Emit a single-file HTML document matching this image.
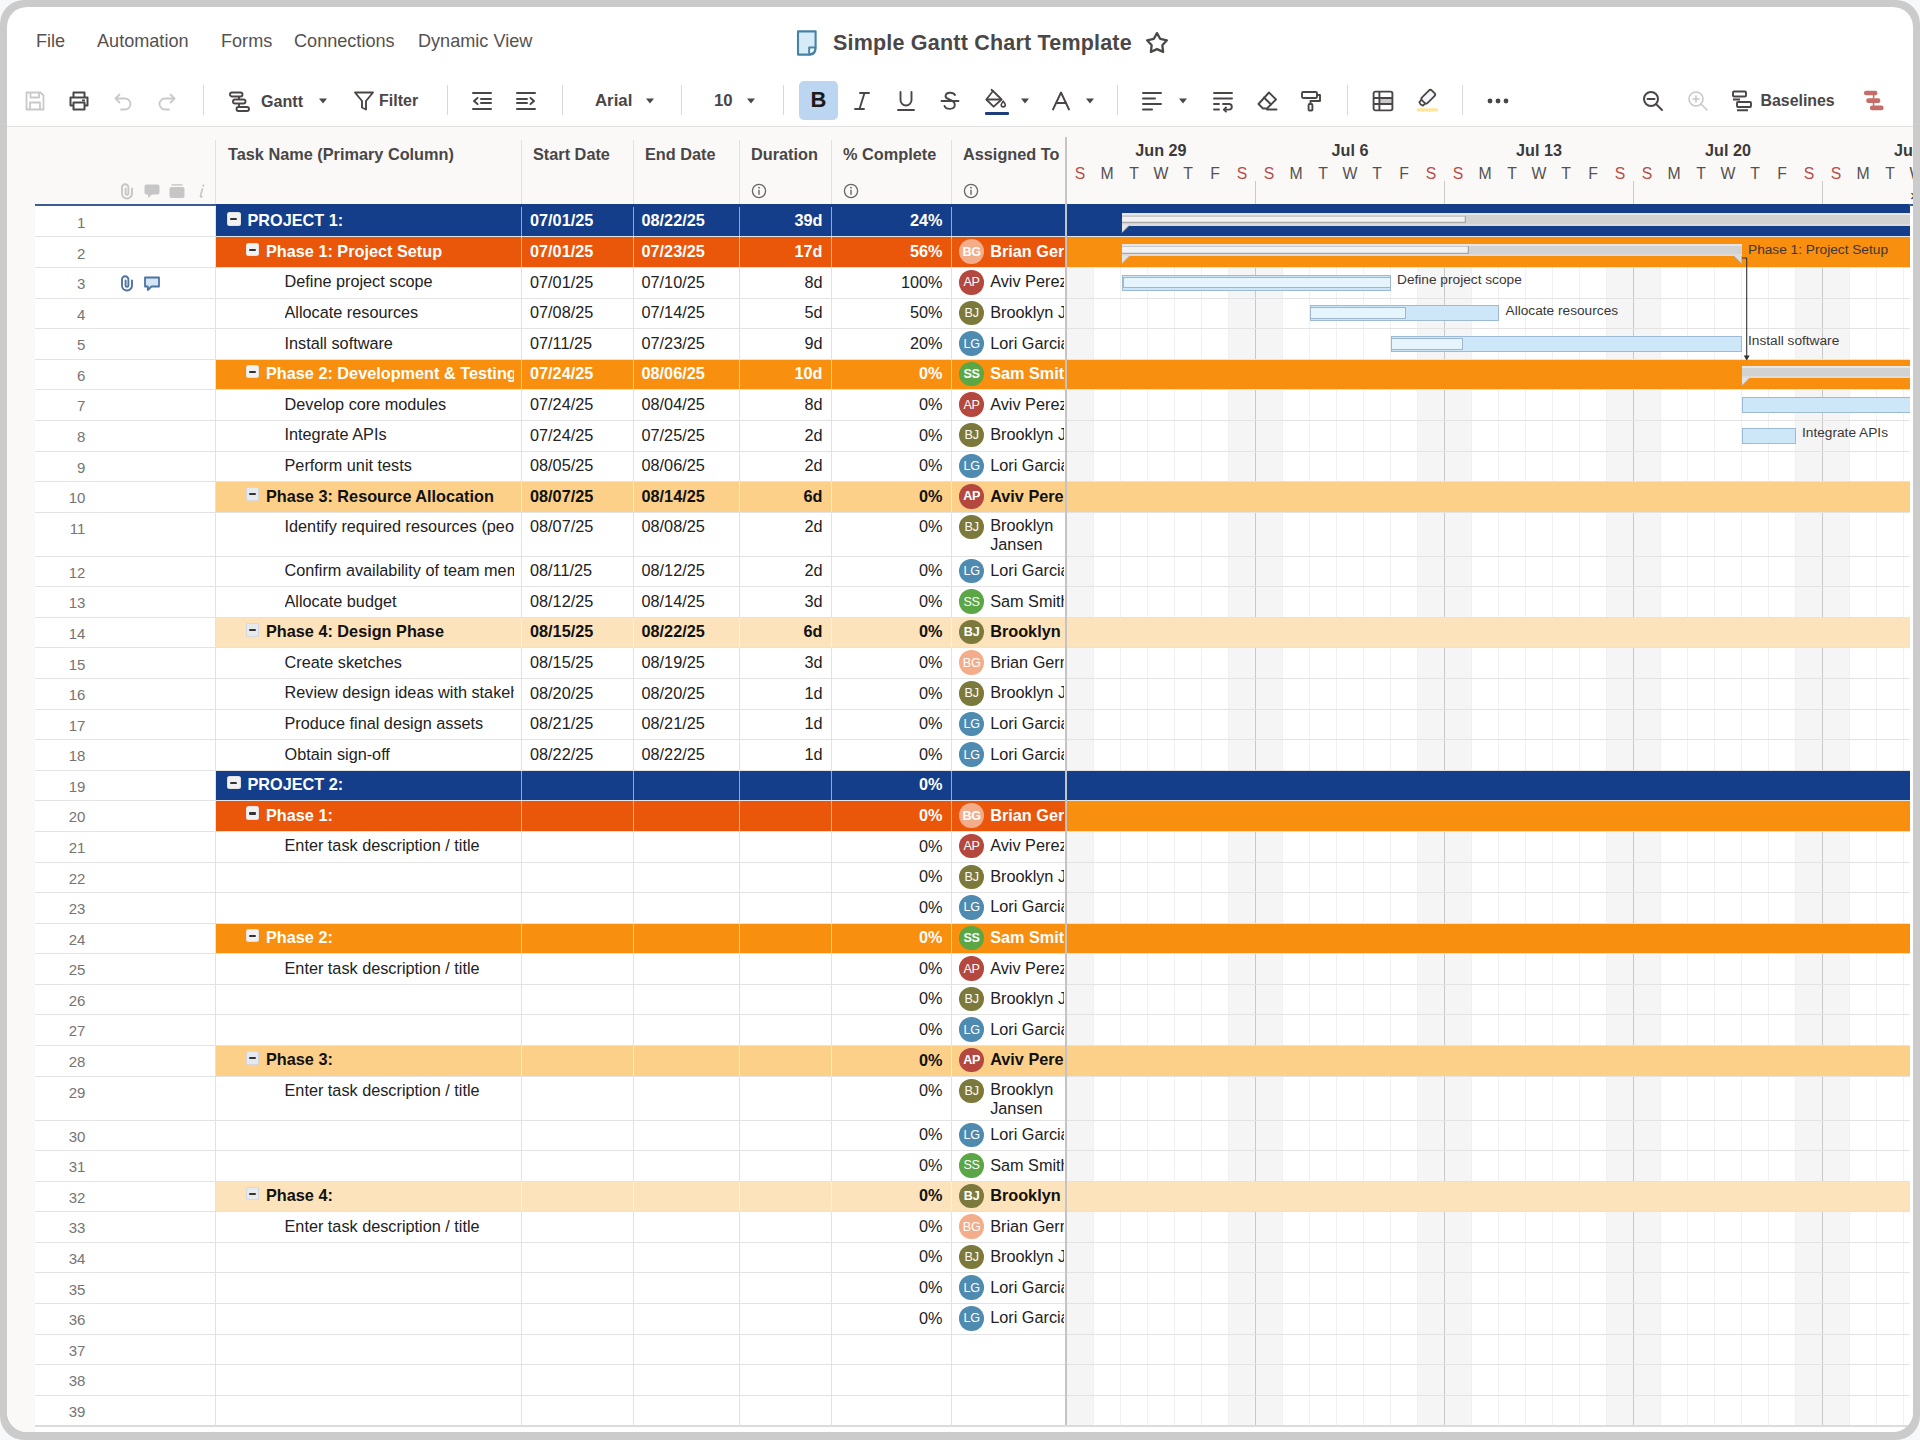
<!DOCTYPE html>
<html><head><meta charset="utf-8"><title>Simple Gantt Chart Template</title>
<style>
html,body{margin:0;padding:0;}
body{width:1920px;height:1440px;position:relative;overflow:hidden;background:#f6f8fa;font-family:"Liberation Sans",sans-serif;}
.t{position:absolute;white-space:nowrap;}
.r{position:absolute;}
svg{position:absolute;overflow:visible;}
</style></head><body>

<div class="r" style="left:0;top:0;width:1920px;height:1440px;background:#cbcbcb;border-radius:24px;"></div>
<div class="r" style="left:7px;top:7px;width:1906px;height:1425px;background:#ffffff;border-radius:20px;overflow:hidden;">
<div class="r" style="left:-7px;top:-7px;width:1920px;height:1440px;">
<div class="t" style="left:36.00px;top:28.71px;font-size:18.1px;line-height:24px;color:#555150;">File</div>
<div class="t" style="left:97.00px;top:28.71px;font-size:18.1px;line-height:24px;color:#555150;">Automation</div>
<div class="t" style="left:221.00px;top:28.71px;font-size:18.1px;line-height:24px;color:#555150;">Forms</div>
<div class="t" style="left:294.00px;top:28.71px;font-size:18.1px;line-height:24px;color:#555150;">Connections</div>
<div class="t" style="left:418.00px;top:28.71px;font-size:18.1px;line-height:24px;color:#555150;">Dynamic View</div>
<svg style="left:795px;top:28px" width="24" height="30" viewBox="0 0 24 30">
<path d="M3 3.4 H20.6 V19.5 C20.6 24 18.5 26.6 14.5 26.6 H3 Z" fill="#d6ebf8" stroke="#4682a5" stroke-width="2.1" stroke-linejoin="round"/>
<path d="M14.2 26.4 V19.6 H20.4 C20.4 23.4 18.5 26.2 14.2 26.4 Z" fill="#ffffff" stroke="#4682a5" stroke-width="2" stroke-linejoin="round"/>
</svg>
<div class="t" style="left:833.00px;top:28.75px;font-size:21.5px;line-height:28px;color:#4b4747;font-weight:bold;letter-spacing:0.2px;">Simple Gantt Chart Template</div>
<svg style="left:1144.5px;top:31px" width="24" height="24" viewBox="0 0 24 24">
<path d="M12.00 2.10 L15.29 7.97 L21.89 9.29 L17.33 14.23 L18.11 20.91 L12.00 18.10 L5.89 20.91 L6.67 14.23 L2.11 9.29 L8.71 7.97 Z" fill="none" stroke="#4b4747" stroke-width="2.3" stroke-linejoin="round"/>
</svg>
<svg style="left:24.0px;top:89.6px" width="22" height="22" viewBox="0 0 22 22"><g fill="none" stroke="#c9c9c9" stroke-width="1.8" stroke-linejoin="round"><path d="M2.5 2.5 H16.5 L19.5 5.5 V19.5 H2.5 Z"/><path d="M6.5 2.5 V7.5 H15 V2.5"/><path d="M6 19.5 V12.5 H16 V19.5"/></g></svg>
<svg style="left:68.0px;top:89.6px" width="22" height="22" viewBox="0 0 22 22"><g fill="none" stroke="#4a4646" stroke-width="2" stroke-linejoin="round"><path d="M5.5 7 V2.5 H16.5 V7"/><path d="M5.5 15.5 H2.5 V7.5 H19.5 V15.5 H16.5"/><path d="M5.5 12.5 H16.5 V19.5 H5.5 Z"/></g><rect x="14" y="9.5" width="3" height="1.6" fill="#4a4646"/></svg>
<svg style="left:112.0px;top:89.6px" width="22" height="22" viewBox="0 0 22 22"><g fill="none" stroke="#c9c9c9" stroke-width="1.8" stroke-linecap="round" stroke-linejoin="round"><path d="M4 8.5 H13 A5.5 5.5 0 0 1 13 19.5 H9"/><path d="M7.5 4.5 L3.5 8.5 L7.5 12.5"/></g></svg>
<svg style="left:156.0px;top:89.6px" width="22" height="22" viewBox="0 0 22 22"><g fill="none" stroke="#c9c9c9" stroke-width="1.8" stroke-linecap="round" stroke-linejoin="round"><path d="M18 8.5 H9 A5.5 5.5 0 0 0 9 19.5 H13"/><path d="M14.5 4.5 L18.5 8.5 L14.5 12.5"/></g></svg>
<div class="r" style="left:202.50px;top:85.00px;width:1.20px;height:30.00px;background:#d9d7d5;"></div>
<svg style="left:228.5px;top:89.6px" width="21" height="22" viewBox="0 0 21 22"><g fill="none" stroke="#4a4646" stroke-width="1.9"><rect x="1" y="2.5" width="12.5" height="4" rx="2"/><rect x="4" y="9.5" width="12.5" height="4" rx="2"/><rect x="7.5" y="17" width="12.5" height="4" rx="2"/><path d="M10 6.5 V9.5 M10 13.5 V17"/></g></svg>
<div class="t" style="left:261.00px;top:89.59px;font-size:16.1px;line-height:22px;color:#4a4646;font-weight:bold;">Gantt</div>
<svg style="left:318.0px;top:97.6px" width="10" height="6" viewBox="0 0 10 6"><path d="M1 0.5 H9 L5 5.5 Z" fill="#4a4646"/></svg>
<svg style="left:353.0px;top:89.6px" width="22" height="22" viewBox="0 0 22 22"><path d="M2 2.5 H20 L13 11 V19.5 L9 17.5 V11 Z" fill="none" stroke="#4a4646" stroke-width="1.9" stroke-linejoin="round"/></svg>
<div class="t" style="left:379.00px;top:89.58px;font-size:16px;line-height:22px;color:#4a4646;font-weight:bold;">Filter</div>
<div class="r" style="left:446.50px;top:85.00px;width:1.20px;height:30.00px;background:#d9d7d5;"></div>
<svg style="left:471.0px;top:90.6px" width="22" height="20" viewBox="0 0 22 20"><g stroke="#4a4646" stroke-width="2" fill="none" stroke-linecap="round"><path d="M2 2 H20 M10 8 H20 M10 12 H20 M2 18 H20"/><path d="M6.5 7 L3 10 L6.5 13" stroke-linejoin="round"/></g></svg>
<svg style="left:515.0px;top:90.6px" width="22" height="20" viewBox="0 0 22 20"><g stroke="#4a4646" stroke-width="2" fill="none" stroke-linecap="round"><path d="M2 2 H20 M2 8 H12 M2 12 H12 M2 18 H20"/><path d="M15.5 7 L19 10 L15.5 13" stroke-linejoin="round"/></g></svg>
<div class="r" style="left:561.50px;top:85.00px;width:1.20px;height:30.00px;background:#d9d7d5;"></div>
<div class="t" style="left:595.00px;top:89.59px;font-size:16.8px;line-height:22px;color:#4a4646;font-weight:bold;">Arial</div>
<svg style="left:645.0px;top:97.6px" width="10" height="6" viewBox="0 0 10 6"><path d="M1 0.5 H9 L5 5.5 Z" fill="#4a4646"/></svg>
<div class="r" style="left:680.50px;top:85.00px;width:1.20px;height:30.00px;background:#d9d7d5;"></div>
<div class="t" style="left:714.00px;top:89.59px;font-size:16.8px;line-height:22px;color:#4a4646;font-weight:600;">10</div>
<svg style="left:746.0px;top:97.6px" width="10" height="6" viewBox="0 0 10 6"><path d="M1 0.5 H9 L5 5.5 Z" fill="#4a4646"/></svg>
<div class="r" style="left:782.50px;top:85.00px;width:1.20px;height:30.00px;background:#d9d7d5;"></div>
<div class="r" style="left:799px;top:81px;width:39px;height:39px;background:#bcd5f0;border-radius:5px;"></div>
<div class="t" style="left:618.50px;width:400px;text-align:center;top:87.25px;font-size:22px;line-height:26px;color:#1c1a1a;font-weight:bold;">B</div>
<svg style="left:852.0px;top:90.6px" width="20" height="20" viewBox="0 0 20 20"><g stroke="#4a4646" stroke-width="1.9" stroke-linecap="round"><path d="M8 2 H17 M3 18 H12 M12.5 2 L7.5 18"/></g></svg>
<svg style="left:896.0px;top:89.6px" width="20" height="22" viewBox="0 0 20 22"><g stroke="#4a4646" stroke-width="1.9" fill="none" stroke-linecap="round"><path d="M4.5 2 V10 A5.5 5.5 0 0 0 15.5 10 V2"/><path d="M2 20 H18"/></g></svg>
<svg style="left:940.0px;top:89.6px" width="20" height="22" viewBox="0 0 20 22"><g stroke="#4a4646" stroke-width="1.9" fill="none" stroke-linecap="round"><path d="M15 5 C13.5 2 6 1.5 5.5 6 C5 10 15 9 14.8 15 C14.5 20 6 20 4.5 16"/><path d="M1.5 11 H18.5"/></g></svg>
<svg style="left:985px;top:88px" width="24" height="22" viewBox="0 0 24 22"><g stroke="#4a4646" stroke-width="1.8" fill="none" stroke-linejoin="round" stroke-linecap="round"><path d="M8 3 L16.6 11.5 L8.6 18.7 L1.3 11.5 Z"/><path d="M2 11.5 H15.5"/><path d="M6.5 1.8 L8 3"/><path d="M18.2 13.2 C17 15 16.2 15.8 16.2 16.8 A2.05 2.05 0 0 0 20.3 16.8 C20.3 15.8 19.5 15 18.2 13.2 Z" stroke-width="1.6"/></g></svg>
<div class="r" style="left:985.30px;top:112.00px;width:23.70px;height:3.00px;background:#1f3d7c;border-radius:1px;"></div>
<svg style="left:1020.0px;top:97.6px" width="10" height="6" viewBox="0 0 10 6"><path d="M1 0.5 H9 L5 5.5 Z" fill="#4a4646"/></svg>
<svg style="left:1051.0px;top:90.6px" width="20" height="20" viewBox="0 0 20 20"><g stroke="#4a4646" stroke-width="1.9" fill="none" stroke-linecap="round" stroke-linejoin="round"><path d="M2 18.5 L10 1.5 L18 18.5"/><path d="M5.2 12 H14.8"/></g></svg>
<svg style="left:1085.0px;top:97.6px" width="10" height="6" viewBox="0 0 10 6"><path d="M1 0.5 H9 L5 5.5 Z" fill="#4a4646"/></svg>
<div class="r" style="left:1116.50px;top:85.00px;width:1.20px;height:30.00px;background:#d9d7d5;"></div>
<svg style="left:1141.0px;top:90.6px" width="22" height="20" viewBox="0 0 22 20"><g stroke="#4a4646" stroke-width="2" stroke-linecap="round"><path d="M2 2 H20 M2 7.5 H14 M2 13 H20 M2 18.5 H11"/></g></svg>
<svg style="left:1178.0px;top:97.6px" width="10" height="6" viewBox="0 0 10 6"><path d="M1 0.5 H9 L5 5.5 Z" fill="#4a4646"/></svg>
<svg style="left:1212.0px;top:90.6px" width="22" height="20" viewBox="0 0 22 20"><g stroke="#4a4646" stroke-width="1.9" fill="none" stroke-linecap="round" stroke-linejoin="round"><path d="M2 2 H20 M2 7.5 H20 M2 13 H7 M2 18.5 H7"/><path d="M11 13 H17 A2.8 2.8 0 0 1 17 18.6 H12"/><path d="M14 16.5 L12 18.6 L14 20.5"/></g></svg>
<svg style="left:1256.0px;top:89.6px" width="22" height="22" viewBox="0 0 22 22"><g stroke="#4a4646" stroke-width="1.9" fill="none" stroke-linejoin="round" stroke-linecap="round"><path d="M13 2.5 L20 9.5 L11 18.5 H7 L2.5 14 Z"/><path d="M8 7.5 L15 14.5"/><path d="M11 19.5 H20.5"/></g></svg>
<svg style="left:1300.0px;top:89.6px" width="22" height="22" viewBox="0 0 22 22"><g stroke="#4a4646" stroke-width="1.9" fill="none" stroke-linejoin="round"><rect x="2" y="2" width="15" height="6" rx="1.2"/><path d="M17 5 H20 V11 H10.5 V14"/><rect x="8.6" y="14" width="3.8" height="6.5" rx="1"/></g></svg>
<div class="r" style="left:1346.50px;top:85.00px;width:1.20px;height:30.00px;background:#d9d7d5;"></div>
<svg style="left:1372px;top:89.5px" width="22" height="22" viewBox="0 0 22 22"><rect x="8" y="8.2" width="11.8" height="5.6" fill="#c9c9c9"/><g stroke="#4a4646" stroke-width="1.9" fill="none"><rect x="1.6" y="1.6" width="18.8" height="18.8" rx="1.8"/><path d="M1.6 8 H20.4 M1.6 14 H20.4 M7.4 1.6 V20.4"/></g></svg>
<svg style="left:1416px;top:87px" width="24" height="26" viewBox="0 0 24 26"><g transform="translate(11.2 10.8) rotate(45)" stroke="#4a4646" stroke-width="1.8" fill="none" stroke-linejoin="round"><rect x="-4" y="-8.5" width="8" height="14" rx="2.2" fill="#f2f6fa"/><path d="M-2.6 5.5 V8.6 Q0 10 2.6 8.6 V5.5"/></g><rect x="0.8" y="21.3" width="21.3" height="3.2" rx="1.5" fill="#fde59c"/></svg>
<div class="r" style="left:1461.50px;top:85.00px;width:1.20px;height:30.00px;background:#d9d7d5;"></div>
<svg style="left:1487.0px;top:96.6px" width="22" height="8" viewBox="0 0 22 8"><g fill="#4a4646"><circle cx="3" cy="4" r="2.4"/><circle cx="11" cy="4" r="2.4"/><circle cx="19" cy="4" r="2.4"/></g></svg>
<svg style="left:1642.0px;top:89.6px" width="22" height="22" viewBox="0 0 22 22"><g stroke="#4a4646" stroke-width="2" fill="none" stroke-linecap="round"><circle cx="9" cy="9" r="7"/><path d="M14 14 L20 20"/><path d="M5.5 9 H12.5"/></g></svg>
<svg style="left:1686.5px;top:89.6px" width="22" height="22" viewBox="0 0 22 22"><g stroke="#c9c9c9" stroke-width="1.6" fill="none" stroke-linecap="round"><circle cx="9" cy="9" r="7"/><path d="M14 14 L20 20"/><path d="M6 9 H12 M9 6 V12"/></g></svg>
<svg style="left:1731.0px;top:89.6px" width="22" height="22" viewBox="0 0 22 22"><g stroke="#4a4646" stroke-width="1.9" fill="none" stroke-linejoin="round"><rect x="2" y="1.5" width="13" height="5" rx="1"/><path d="M2 9.5 H9"/><rect x="6" y="12" width="14" height="5" rx="1"/><path d="M6 20.3 H17"/></g></svg>
<div class="t" style="left:1760.50px;top:89.58px;font-size:15.9px;line-height:22px;color:#4a4646;font-weight:bold;">Baselines</div>
<svg style="left:1863px;top:89px" width="22" height="23" viewBox="0 0 22 23"><g fill="#c46d66"><rect x="1" y="1.7" width="13.4" height="4.6" rx="2"/><rect x="3.2" y="9.3" width="14.1" height="4.6" rx="2"/><rect x="7" y="16.5" width="13.5" height="4.8" rx="2"/><rect x="9.8" y="6" width="1.6" height="3.5"/><rect x="9.8" y="13.6" width="1.6" height="3.2"/></g></svg>
<div class="r" style="left:7.00px;top:126.00px;width:1906.00px;height:1.20px;background:#e2e0de;"></div>
<div class="r" style="left:7.00px;top:127.20px;width:1906.00px;height:77.00px;background:#faf9f8;"></div>
<div class="r" style="left:7.00px;top:204.00px;width:28.00px;height:1240.00px;background:#faf9f8;"></div>
<div class="r" style="left:214.50px;top:140.00px;width:1.00px;height:64.00px;background:#e3e1df;"></div>
<div class="r" style="left:521.00px;top:140.00px;width:1.00px;height:64.00px;background:#e3e1df;"></div>
<div class="r" style="left:633.00px;top:140.00px;width:1.00px;height:64.00px;background:#e3e1df;"></div>
<div class="r" style="left:738.50px;top:140.00px;width:1.00px;height:64.00px;background:#e3e1df;"></div>
<div class="r" style="left:830.50px;top:140.00px;width:1.00px;height:64.00px;background:#e3e1df;"></div>
<div class="r" style="left:950.50px;top:140.00px;width:1.00px;height:64.00px;background:#e3e1df;"></div>
<div class="r" style="left:1065.00px;top:137.00px;width:2.00px;height:67.00px;background:#c8c6c4;"></div>
<div class="t" style="left:228.00px;top:142.69px;font-size:16.3px;line-height:22px;color:#4a4646;font-weight:bold;">Task Name (Primary Column)</div>
<div class="t" style="left:533.00px;top:142.69px;font-size:16.3px;line-height:22px;color:#4a4646;font-weight:bold;">Start Date</div>
<div class="t" style="left:645.00px;top:142.69px;font-size:16.3px;line-height:22px;color:#4a4646;font-weight:bold;">End Date</div>
<div class="t" style="left:751.00px;top:142.69px;font-size:16.3px;line-height:22px;color:#4a4646;font-weight:bold;">Duration</div>
<div class="t" style="left:843.00px;top:142.69px;font-size:16.3px;line-height:22px;color:#4a4646;font-weight:bold;">% Complete</div>
<div class="t" style="left:963.00px;top:142.69px;font-size:16.3px;line-height:22px;color:#4a4646;font-weight:bold;">Assigned To</div>
<svg style="left:751.0px;top:182.5px" width="16" height="16" viewBox="0 0 16 16"><circle cx="8" cy="8" r="6.6" fill="none" stroke="#6a6666" stroke-width="1.3"/><rect x="7.3" y="6.8" width="1.4" height="5" fill="#6a6666"/><circle cx="8" cy="4.7" r="0.9" fill="#6a6666"/></svg>
<svg style="left:843.0px;top:182.5px" width="16" height="16" viewBox="0 0 16 16"><circle cx="8" cy="8" r="6.6" fill="none" stroke="#6a6666" stroke-width="1.3"/><rect x="7.3" y="6.8" width="1.4" height="5" fill="#6a6666"/><circle cx="8" cy="4.7" r="0.9" fill="#6a6666"/></svg>
<svg style="left:963.0px;top:182.5px" width="16" height="16" viewBox="0 0 16 16"><circle cx="8" cy="8" r="6.6" fill="none" stroke="#6a6666" stroke-width="1.3"/><rect x="7.3" y="6.8" width="1.4" height="5" fill="#6a6666"/><circle cx="8" cy="4.7" r="0.9" fill="#6a6666"/></svg>
<svg style="left:119.0px;top:181.5px" width="16" height="18" viewBox="0 0 16 18"><path d="M13 6.5 V11.5 A5 5 0 0 1 3 11.5 V5.5 A3.2 3.2 0 0 1 9.4 5.5 V11.5 A1.4 1.4 0 0 1 6.6 11.5 V6.5" fill="none" stroke="#c6c6c6" stroke-width="1.9" stroke-linecap="round"/></svg>
<svg style="left:142.5px;top:182.5px" width="18" height="17" viewBox="0 0 18 17"><path d="M3.5 1.5 H14.5 A2 2 0 0 1 16.5 3.5 V9.5 A2 2 0 0 1 14.5 11.5 H9 L5 15 V11.5 H3.5 A2 2 0 0 1 1.5 9.5 V3.5 A2 2 0 0 1 3.5 1.5 Z" fill="#c6c6c6"/></svg>
<svg style="left:167.5px;top:183.0px" width="18" height="16" viewBox="0 0 18 16"><rect x="1.5" y="4" width="15" height="11" rx="2" fill="#c6c6c6"/><rect x="3.5" y="1.2" width="11" height="1.4" fill="#c6c6c6"/></svg>
<svg style="left:195.5px;top:182.5px" width="10" height="16" viewBox="0 0 10 16"><path d="M6.5 6 L4.5 12.5 Q4 14.5 6 13.5" fill="none" stroke="#c6c6c6" stroke-width="1.6" stroke-linecap="round"/><circle cx="7.3" cy="2.6" r="1.1" fill="#c6c6c6"/></svg>
<div class="r" style="left:35.00px;top:204.00px;width:1878.00px;height:2.30px;background:#3d5c96;"></div>
<div class="r" style="left:35.00px;top:206.90px;width:1031.00px;height:1219.46px;background:#ffffff;"></div>
<div class="r" style="left:214.50px;top:206.90px;width:1.00px;height:1219.46px;background:#e2e2e2;"></div>
<div class="r" style="left:521.00px;top:206.90px;width:1.00px;height:1219.46px;background:#e2e2e2;"></div>
<div class="r" style="left:633.00px;top:206.90px;width:1.00px;height:1219.46px;background:#e2e2e2;"></div>
<div class="r" style="left:738.50px;top:206.90px;width:1.00px;height:1219.46px;background:#e2e2e2;"></div>
<div class="r" style="left:830.50px;top:206.90px;width:1.00px;height:1219.46px;background:#e2e2e2;"></div>
<div class="r" style="left:950.50px;top:206.90px;width:1.00px;height:1219.46px;background:#e2e2e2;"></div>
<div class="r" style="left:1066.00px;top:204.40px;width:847.00px;height:1221.96px;background:#ffffff;"></div>
<div class="r" style="left:1066.00px;top:206.90px;width:27.50px;height:1219.46px;background:#f5f5f5;"></div>
<div class="r" style="left:1228.50px;top:206.90px;width:54.00px;height:1219.46px;background:#f5f5f5;"></div>
<div class="r" style="left:1417.50px;top:206.90px;width:54.00px;height:1219.46px;background:#f5f5f5;"></div>
<div class="r" style="left:1606.50px;top:206.90px;width:54.00px;height:1219.46px;background:#f5f5f5;"></div>
<div class="r" style="left:1795.50px;top:206.90px;width:54.00px;height:1219.46px;background:#f5f5f5;"></div>
<div class="r" style="left:1093.00px;top:206.90px;width:1.00px;height:1219.46px;background:#f0f0f0;"></div>
<div class="r" style="left:1120.00px;top:206.90px;width:1.00px;height:1219.46px;background:#f0f0f0;"></div>
<div class="r" style="left:1147.00px;top:206.90px;width:1.00px;height:1219.46px;background:#f0f0f0;"></div>
<div class="r" style="left:1174.00px;top:206.90px;width:1.00px;height:1219.46px;background:#f0f0f0;"></div>
<div class="r" style="left:1201.00px;top:206.90px;width:1.00px;height:1219.46px;background:#f0f0f0;"></div>
<div class="r" style="left:1228.00px;top:206.90px;width:1.00px;height:1219.46px;background:#f0f0f0;"></div>
<div class="r" style="left:1255.00px;top:206.90px;width:1.00px;height:1219.46px;background:#c8c8c8;"></div>
<div class="r" style="left:1282.00px;top:206.90px;width:1.00px;height:1219.46px;background:#f0f0f0;"></div>
<div class="r" style="left:1309.00px;top:206.90px;width:1.00px;height:1219.46px;background:#f0f0f0;"></div>
<div class="r" style="left:1336.00px;top:206.90px;width:1.00px;height:1219.46px;background:#f0f0f0;"></div>
<div class="r" style="left:1363.00px;top:206.90px;width:1.00px;height:1219.46px;background:#f0f0f0;"></div>
<div class="r" style="left:1390.00px;top:206.90px;width:1.00px;height:1219.46px;background:#f0f0f0;"></div>
<div class="r" style="left:1417.00px;top:206.90px;width:1.00px;height:1219.46px;background:#f0f0f0;"></div>
<div class="r" style="left:1444.00px;top:206.90px;width:1.00px;height:1219.46px;background:#c8c8c8;"></div>
<div class="r" style="left:1471.00px;top:206.90px;width:1.00px;height:1219.46px;background:#f0f0f0;"></div>
<div class="r" style="left:1498.00px;top:206.90px;width:1.00px;height:1219.46px;background:#f0f0f0;"></div>
<div class="r" style="left:1525.00px;top:206.90px;width:1.00px;height:1219.46px;background:#f0f0f0;"></div>
<div class="r" style="left:1552.00px;top:206.90px;width:1.00px;height:1219.46px;background:#f0f0f0;"></div>
<div class="r" style="left:1579.00px;top:206.90px;width:1.00px;height:1219.46px;background:#f0f0f0;"></div>
<div class="r" style="left:1606.00px;top:206.90px;width:1.00px;height:1219.46px;background:#f0f0f0;"></div>
<div class="r" style="left:1633.00px;top:206.90px;width:1.00px;height:1219.46px;background:#c8c8c8;"></div>
<div class="r" style="left:1660.00px;top:206.90px;width:1.00px;height:1219.46px;background:#f0f0f0;"></div>
<div class="r" style="left:1687.00px;top:206.90px;width:1.00px;height:1219.46px;background:#f0f0f0;"></div>
<div class="r" style="left:1714.00px;top:206.90px;width:1.00px;height:1219.46px;background:#f0f0f0;"></div>
<div class="r" style="left:1741.00px;top:206.90px;width:1.00px;height:1219.46px;background:#f0f0f0;"></div>
<div class="r" style="left:1768.00px;top:206.90px;width:1.00px;height:1219.46px;background:#f0f0f0;"></div>
<div class="r" style="left:1795.00px;top:206.90px;width:1.00px;height:1219.46px;background:#f0f0f0;"></div>
<div class="r" style="left:1822.00px;top:206.90px;width:1.00px;height:1219.46px;background:#c8c8c8;"></div>
<div class="r" style="left:1849.00px;top:206.90px;width:1.00px;height:1219.46px;background:#f0f0f0;"></div>
<div class="r" style="left:1876.00px;top:206.90px;width:1.00px;height:1219.46px;background:#f0f0f0;"></div>
<div class="r" style="left:1903.00px;top:206.90px;width:1.00px;height:1219.46px;background:#f0f0f0;"></div>
<div class="r" style="left:35.00px;top:236.48px;width:1875.00px;height:1.00px;background:#e3e3e3;"></div>
<div class="r" style="left:216.00px;top:204.30px;width:850.00px;height:32.18px;background:#143e89;"></div>
<div class="r" style="left:521.00px;top:206.90px;width:1.00px;height:29.58px;background:rgba(255,255,255,0.55);"></div>
<div class="r" style="left:633.00px;top:206.90px;width:1.00px;height:29.58px;background:rgba(255,255,255,0.55);"></div>
<div class="r" style="left:738.50px;top:206.90px;width:1.00px;height:29.58px;background:rgba(255,255,255,0.55);"></div>
<div class="r" style="left:830.50px;top:206.90px;width:1.00px;height:29.58px;background:rgba(255,255,255,0.55);"></div>
<div class="r" style="left:950.50px;top:206.90px;width:1.00px;height:29.58px;background:rgba(255,255,255,0.55);"></div>
<div class="r" style="left:1066.00px;top:204.30px;width:844.00px;height:32.18px;background:#143e89;"></div>
<div class="r" style="left:35.00px;top:267.06px;width:1875.00px;height:1.00px;background:#e3e3e3;"></div>
<div class="r" style="left:216.00px;top:237.48px;width:850.00px;height:29.58px;background:#ea560a;"></div>
<div class="r" style="left:521.00px;top:237.48px;width:1.00px;height:29.58px;background:rgba(255,255,255,0.55);"></div>
<div class="r" style="left:633.00px;top:237.48px;width:1.00px;height:29.58px;background:rgba(255,255,255,0.55);"></div>
<div class="r" style="left:738.50px;top:237.48px;width:1.00px;height:29.58px;background:rgba(255,255,255,0.55);"></div>
<div class="r" style="left:830.50px;top:237.48px;width:1.00px;height:29.58px;background:rgba(255,255,255,0.55);"></div>
<div class="r" style="left:950.50px;top:237.48px;width:1.00px;height:29.58px;background:rgba(255,255,255,0.55);"></div>
<div class="r" style="left:1066.00px;top:237.48px;width:844.00px;height:29.58px;background:#f98f0f;"></div>
<div class="r" style="left:35.00px;top:297.64px;width:1875.00px;height:1.00px;background:#e3e3e3;"></div>
<div class="r" style="left:35.00px;top:328.22px;width:1875.00px;height:1.00px;background:#e3e3e3;"></div>
<div class="r" style="left:35.00px;top:358.80px;width:1875.00px;height:1.00px;background:#e3e3e3;"></div>
<div class="r" style="left:35.00px;top:389.38px;width:1875.00px;height:1.00px;background:#e3e3e3;"></div>
<div class="r" style="left:216.00px;top:359.80px;width:850.00px;height:29.58px;background:#f98f0f;"></div>
<div class="r" style="left:521.00px;top:359.80px;width:1.00px;height:29.58px;background:rgba(255,255,255,0.55);"></div>
<div class="r" style="left:633.00px;top:359.80px;width:1.00px;height:29.58px;background:rgba(255,255,255,0.55);"></div>
<div class="r" style="left:738.50px;top:359.80px;width:1.00px;height:29.58px;background:rgba(255,255,255,0.55);"></div>
<div class="r" style="left:830.50px;top:359.80px;width:1.00px;height:29.58px;background:rgba(255,255,255,0.55);"></div>
<div class="r" style="left:950.50px;top:359.80px;width:1.00px;height:29.58px;background:rgba(255,255,255,0.55);"></div>
<div class="r" style="left:1066.00px;top:359.80px;width:844.00px;height:29.58px;background:#f98f0f;"></div>
<div class="r" style="left:35.00px;top:419.96px;width:1875.00px;height:1.00px;background:#e3e3e3;"></div>
<div class="r" style="left:35.00px;top:450.54px;width:1875.00px;height:1.00px;background:#e3e3e3;"></div>
<div class="r" style="left:35.00px;top:481.12px;width:1875.00px;height:1.00px;background:#e3e3e3;"></div>
<div class="r" style="left:35.00px;top:511.70px;width:1875.00px;height:1.00px;background:#e3e3e3;"></div>
<div class="r" style="left:216.00px;top:482.12px;width:850.00px;height:29.58px;background:#fdd08a;"></div>
<div class="r" style="left:521.00px;top:482.12px;width:1.00px;height:29.58px;background:rgba(255,255,255,0.55);"></div>
<div class="r" style="left:633.00px;top:482.12px;width:1.00px;height:29.58px;background:rgba(255,255,255,0.55);"></div>
<div class="r" style="left:738.50px;top:482.12px;width:1.00px;height:29.58px;background:rgba(255,255,255,0.55);"></div>
<div class="r" style="left:830.50px;top:482.12px;width:1.00px;height:29.58px;background:rgba(255,255,255,0.55);"></div>
<div class="r" style="left:950.50px;top:482.12px;width:1.00px;height:29.58px;background:rgba(255,255,255,0.55);"></div>
<div class="r" style="left:1066.00px;top:482.12px;width:844.00px;height:29.58px;background:#fdd08a;"></div>
<div class="r" style="left:35.00px;top:555.70px;width:1875.00px;height:1.00px;background:#e3e3e3;"></div>
<div class="r" style="left:35.00px;top:586.28px;width:1875.00px;height:1.00px;background:#e3e3e3;"></div>
<div class="r" style="left:35.00px;top:616.86px;width:1875.00px;height:1.00px;background:#e3e3e3;"></div>
<div class="r" style="left:35.00px;top:647.44px;width:1875.00px;height:1.00px;background:#e3e3e3;"></div>
<div class="r" style="left:216.00px;top:617.86px;width:850.00px;height:29.58px;background:#fde3bb;"></div>
<div class="r" style="left:521.00px;top:617.86px;width:1.00px;height:29.58px;background:rgba(255,255,255,0.55);"></div>
<div class="r" style="left:633.00px;top:617.86px;width:1.00px;height:29.58px;background:rgba(255,255,255,0.55);"></div>
<div class="r" style="left:738.50px;top:617.86px;width:1.00px;height:29.58px;background:rgba(255,255,255,0.55);"></div>
<div class="r" style="left:830.50px;top:617.86px;width:1.00px;height:29.58px;background:rgba(255,255,255,0.55);"></div>
<div class="r" style="left:950.50px;top:617.86px;width:1.00px;height:29.58px;background:rgba(255,255,255,0.55);"></div>
<div class="r" style="left:1066.00px;top:617.86px;width:844.00px;height:29.58px;background:#fde3bb;"></div>
<div class="r" style="left:35.00px;top:678.02px;width:1875.00px;height:1.00px;background:#e3e3e3;"></div>
<div class="r" style="left:35.00px;top:708.60px;width:1875.00px;height:1.00px;background:#e3e3e3;"></div>
<div class="r" style="left:35.00px;top:739.18px;width:1875.00px;height:1.00px;background:#e3e3e3;"></div>
<div class="r" style="left:35.00px;top:769.76px;width:1875.00px;height:1.00px;background:#e3e3e3;"></div>
<div class="r" style="left:35.00px;top:800.34px;width:1875.00px;height:1.00px;background:#e3e3e3;"></div>
<div class="r" style="left:216.00px;top:770.76px;width:850.00px;height:29.58px;background:#143e89;"></div>
<div class="r" style="left:521.00px;top:770.76px;width:1.00px;height:29.58px;background:rgba(255,255,255,0.55);"></div>
<div class="r" style="left:633.00px;top:770.76px;width:1.00px;height:29.58px;background:rgba(255,255,255,0.55);"></div>
<div class="r" style="left:738.50px;top:770.76px;width:1.00px;height:29.58px;background:rgba(255,255,255,0.55);"></div>
<div class="r" style="left:830.50px;top:770.76px;width:1.00px;height:29.58px;background:rgba(255,255,255,0.55);"></div>
<div class="r" style="left:950.50px;top:770.76px;width:1.00px;height:29.58px;background:rgba(255,255,255,0.55);"></div>
<div class="r" style="left:1066.00px;top:770.76px;width:844.00px;height:29.58px;background:#143e89;"></div>
<div class="r" style="left:35.00px;top:830.92px;width:1875.00px;height:1.00px;background:#e3e3e3;"></div>
<div class="r" style="left:216.00px;top:801.34px;width:850.00px;height:29.58px;background:#ea560a;"></div>
<div class="r" style="left:521.00px;top:801.34px;width:1.00px;height:29.58px;background:rgba(255,255,255,0.55);"></div>
<div class="r" style="left:633.00px;top:801.34px;width:1.00px;height:29.58px;background:rgba(255,255,255,0.55);"></div>
<div class="r" style="left:738.50px;top:801.34px;width:1.00px;height:29.58px;background:rgba(255,255,255,0.55);"></div>
<div class="r" style="left:830.50px;top:801.34px;width:1.00px;height:29.58px;background:rgba(255,255,255,0.55);"></div>
<div class="r" style="left:950.50px;top:801.34px;width:1.00px;height:29.58px;background:rgba(255,255,255,0.55);"></div>
<div class="r" style="left:1066.00px;top:801.34px;width:844.00px;height:29.58px;background:#f98f0f;"></div>
<div class="r" style="left:35.00px;top:861.50px;width:1875.00px;height:1.00px;background:#e3e3e3;"></div>
<div class="r" style="left:35.00px;top:892.08px;width:1875.00px;height:1.00px;background:#e3e3e3;"></div>
<div class="r" style="left:35.00px;top:922.66px;width:1875.00px;height:1.00px;background:#e3e3e3;"></div>
<div class="r" style="left:35.00px;top:953.24px;width:1875.00px;height:1.00px;background:#e3e3e3;"></div>
<div class="r" style="left:216.00px;top:923.66px;width:850.00px;height:29.58px;background:#f98f0f;"></div>
<div class="r" style="left:521.00px;top:923.66px;width:1.00px;height:29.58px;background:rgba(255,255,255,0.55);"></div>
<div class="r" style="left:633.00px;top:923.66px;width:1.00px;height:29.58px;background:rgba(255,255,255,0.55);"></div>
<div class="r" style="left:738.50px;top:923.66px;width:1.00px;height:29.58px;background:rgba(255,255,255,0.55);"></div>
<div class="r" style="left:830.50px;top:923.66px;width:1.00px;height:29.58px;background:rgba(255,255,255,0.55);"></div>
<div class="r" style="left:950.50px;top:923.66px;width:1.00px;height:29.58px;background:rgba(255,255,255,0.55);"></div>
<div class="r" style="left:1066.00px;top:923.66px;width:844.00px;height:29.58px;background:#f98f0f;"></div>
<div class="r" style="left:35.00px;top:983.82px;width:1875.00px;height:1.00px;background:#e3e3e3;"></div>
<div class="r" style="left:35.00px;top:1014.40px;width:1875.00px;height:1.00px;background:#e3e3e3;"></div>
<div class="r" style="left:35.00px;top:1044.98px;width:1875.00px;height:1.00px;background:#e3e3e3;"></div>
<div class="r" style="left:35.00px;top:1075.56px;width:1875.00px;height:1.00px;background:#e3e3e3;"></div>
<div class="r" style="left:216.00px;top:1045.98px;width:850.00px;height:29.58px;background:#fdd08a;"></div>
<div class="r" style="left:521.00px;top:1045.98px;width:1.00px;height:29.58px;background:rgba(255,255,255,0.55);"></div>
<div class="r" style="left:633.00px;top:1045.98px;width:1.00px;height:29.58px;background:rgba(255,255,255,0.55);"></div>
<div class="r" style="left:738.50px;top:1045.98px;width:1.00px;height:29.58px;background:rgba(255,255,255,0.55);"></div>
<div class="r" style="left:830.50px;top:1045.98px;width:1.00px;height:29.58px;background:rgba(255,255,255,0.55);"></div>
<div class="r" style="left:950.50px;top:1045.98px;width:1.00px;height:29.58px;background:rgba(255,255,255,0.55);"></div>
<div class="r" style="left:1066.00px;top:1045.98px;width:844.00px;height:29.58px;background:#fdd08a;"></div>
<div class="r" style="left:35.00px;top:1119.56px;width:1875.00px;height:1.00px;background:#e3e3e3;"></div>
<div class="r" style="left:35.00px;top:1150.14px;width:1875.00px;height:1.00px;background:#e3e3e3;"></div>
<div class="r" style="left:35.00px;top:1180.72px;width:1875.00px;height:1.00px;background:#e3e3e3;"></div>
<div class="r" style="left:35.00px;top:1211.30px;width:1875.00px;height:1.00px;background:#e3e3e3;"></div>
<div class="r" style="left:216.00px;top:1181.72px;width:850.00px;height:29.58px;background:#fde3bb;"></div>
<div class="r" style="left:521.00px;top:1181.72px;width:1.00px;height:29.58px;background:rgba(255,255,255,0.55);"></div>
<div class="r" style="left:633.00px;top:1181.72px;width:1.00px;height:29.58px;background:rgba(255,255,255,0.55);"></div>
<div class="r" style="left:738.50px;top:1181.72px;width:1.00px;height:29.58px;background:rgba(255,255,255,0.55);"></div>
<div class="r" style="left:830.50px;top:1181.72px;width:1.00px;height:29.58px;background:rgba(255,255,255,0.55);"></div>
<div class="r" style="left:950.50px;top:1181.72px;width:1.00px;height:29.58px;background:rgba(255,255,255,0.55);"></div>
<div class="r" style="left:1066.00px;top:1181.72px;width:844.00px;height:29.58px;background:#fde3bb;"></div>
<div class="r" style="left:35.00px;top:1241.88px;width:1875.00px;height:1.00px;background:#e3e3e3;"></div>
<div class="r" style="left:35.00px;top:1272.46px;width:1875.00px;height:1.00px;background:#e3e3e3;"></div>
<div class="r" style="left:35.00px;top:1303.04px;width:1875.00px;height:1.00px;background:#e3e3e3;"></div>
<div class="r" style="left:35.00px;top:1333.62px;width:1875.00px;height:1.00px;background:#e3e3e3;"></div>
<div class="r" style="left:35.00px;top:1364.20px;width:1875.00px;height:1.00px;background:#e3e3e3;"></div>
<div class="r" style="left:35.00px;top:1394.78px;width:1875.00px;height:1.00px;background:#e3e3e3;"></div>
<div class="r" style="left:35.00px;top:1425.36px;width:1875.00px;height:1.00px;background:#e3e3e3;"></div>
<div class="r" style="left:1909.00px;top:204.00px;width:4.00px;height:2.30px;background:#3d5c96;"></div>
<div class="r" style="left:1065.00px;top:204.40px;width:1.60px;height:1221.96px;background:#c4c4c4;"></div>
<div class="r" style="left:35.00px;top:1425.36px;width:1875.00px;height:1.30px;background:#dcdcdc;"></div>
<div class="t" style="right:1834.70px;top:213.97px;font-size:15px;line-height:18px;color:#777474;text-align:right;">1</div>
<div class="r" style="left:227.0px;top:212.0px;width:13.6px;height:13.6px;background:#f1f1f1;border-radius:2.5px;box-shadow:inset 0 0 0 0.8px rgba(0,0,0,0.08);"></div>
<div class="r" style="left:230.2px;top:217.9px;width:7.2px;height:2.3px;background:#333;border-radius:1px;"></div>
<div class="t" style="left:247.50px;top:210.49px;font-size:16.25px;line-height:20px;color:#ffffff;font-weight:bold;">PROJECT 1:</div>
<div class="t" style="left:530.00px;top:210.49px;font-size:16.25px;line-height:20px;color:#ffffff;font-weight:bold;">07/01/25</div>
<div class="t" style="left:641.50px;top:210.49px;font-size:16.25px;line-height:20px;color:#ffffff;font-weight:bold;">08/22/25</div>
<div class="t" style="right:1097.50px;top:210.49px;font-size:16.25px;line-height:20px;color:#ffffff;text-align:right;font-weight:bold;">39d</div>
<div class="t" style="right:977.50px;top:210.49px;font-size:16.25px;line-height:20px;color:#ffffff;text-align:right;font-weight:bold;">24%</div>
<div class="t" style="right:1834.70px;top:244.55px;font-size:15px;line-height:18px;color:#777474;text-align:right;">2</div>
<div class="r" style="left:245.6px;top:242.6px;width:13.6px;height:13.6px;background:#f1f1f1;border-radius:2.5px;box-shadow:inset 0 0 0 0.8px rgba(0,0,0,0.08);"></div>
<div class="r" style="left:248.8px;top:248.5px;width:7.2px;height:2.3px;background:#333;border-radius:1px;"></div>
<div class="t" style="left:266px;top:240.88px;width:248px;overflow:hidden;font-size:16.25px;line-height:20px;font-weight:bold;color:#ffffff;">Phase 1: Project Setup</div>
<div class="t" style="left:530.00px;top:241.07px;font-size:16.25px;line-height:20px;color:#ffffff;font-weight:bold;">07/01/25</div>
<div class="t" style="left:641.50px;top:241.07px;font-size:16.25px;line-height:20px;color:#ffffff;font-weight:bold;">07/23/25</div>
<div class="t" style="right:1097.50px;top:241.07px;font-size:16.25px;line-height:20px;color:#ffffff;text-align:right;font-weight:bold;">17d</div>
<div class="t" style="right:977.50px;top:241.07px;font-size:16.25px;line-height:20px;color:#ffffff;text-align:right;font-weight:bold;">56%</div>
<div class="r" style="left:959.4px;top:239.4px;width:24.5px;height:24.5px;border-radius:50%;background:#f3ad8b;"></div>
<div class="t" style="left:771.60px;width:400px;text-align:center;top:243.82px;font-size:12.6px;line-height:16px;color:#ffffff;font-weight:bold;letter-spacing:-0.3px;">BG</div>
<div class="t" style="left:990.2px;top:240.88px;width:73.8px;overflow:hidden;font-size:16.25px;line-height:20px;font-weight:bold;color:#ffffff;">Brian Germain</div>
<div class="t" style="right:1834.70px;top:275.13px;font-size:15px;line-height:18px;color:#777474;text-align:right;">3</div>
<div class="t" style="left:284.5px;top:271.46px;width:229.5px;overflow:hidden;font-size:16.25px;line-height:20px;color:#222222;">Define project scope</div>
<div class="t" style="left:530.00px;top:271.65px;font-size:16.25px;line-height:20px;color:#222222;">07/01/25</div>
<div class="t" style="left:641.50px;top:271.65px;font-size:16.25px;line-height:20px;color:#222222;">07/10/25</div>
<div class="t" style="right:1097.50px;top:271.65px;font-size:16.25px;line-height:20px;color:#222222;text-align:right;">8d</div>
<div class="t" style="right:977.50px;top:271.65px;font-size:16.25px;line-height:20px;color:#222222;text-align:right;">100%</div>
<div class="r" style="left:959.4px;top:270.0px;width:24.5px;height:24.5px;border-radius:50%;background:#b4473e;"></div>
<div class="t" style="left:771.60px;width:400px;text-align:center;top:274.40px;font-size:12.6px;line-height:16px;color:#ffffff;letter-spacing:-0.3px;">AP</div>
<div class="t" style="left:990.2px;top:271.46px;width:73.8px;overflow:hidden;font-size:16.25px;line-height:20px;color:#222222;">Aviv Perez</div>
<div class="t" style="right:1834.70px;top:305.71px;font-size:15px;line-height:18px;color:#777474;text-align:right;">4</div>
<div class="t" style="left:284.5px;top:302.04px;width:229.5px;overflow:hidden;font-size:16.25px;line-height:20px;color:#222222;">Allocate resources</div>
<div class="t" style="left:530.00px;top:302.23px;font-size:16.25px;line-height:20px;color:#222222;">07/08/25</div>
<div class="t" style="left:641.50px;top:302.23px;font-size:16.25px;line-height:20px;color:#222222;">07/14/25</div>
<div class="t" style="right:1097.50px;top:302.23px;font-size:16.25px;line-height:20px;color:#222222;text-align:right;">5d</div>
<div class="t" style="right:977.50px;top:302.23px;font-size:16.25px;line-height:20px;color:#222222;text-align:right;">50%</div>
<div class="r" style="left:959.4px;top:300.6px;width:24.5px;height:24.5px;border-radius:50%;background:#7b7a3c;"></div>
<div class="t" style="left:771.60px;width:400px;text-align:center;top:304.98px;font-size:12.6px;line-height:16px;color:#ffffff;letter-spacing:-0.3px;">BJ</div>
<div class="t" style="left:990.2px;top:302.04px;width:73.8px;overflow:hidden;font-size:16.25px;line-height:20px;color:#222222;">Brooklyn Jansen</div>
<div class="t" style="right:1834.70px;top:336.29px;font-size:15px;line-height:18px;color:#777474;text-align:right;">5</div>
<div class="t" style="left:284.5px;top:332.62px;width:229.5px;overflow:hidden;font-size:16.25px;line-height:20px;color:#222222;">Install software</div>
<div class="t" style="left:530.00px;top:332.81px;font-size:16.25px;line-height:20px;color:#222222;">07/11/25</div>
<div class="t" style="left:641.50px;top:332.81px;font-size:16.25px;line-height:20px;color:#222222;">07/23/25</div>
<div class="t" style="right:1097.50px;top:332.81px;font-size:16.25px;line-height:20px;color:#222222;text-align:right;">9d</div>
<div class="t" style="right:977.50px;top:332.81px;font-size:16.25px;line-height:20px;color:#222222;text-align:right;">20%</div>
<div class="r" style="left:959.4px;top:331.2px;width:24.5px;height:24.5px;border-radius:50%;background:#4f8bb0;"></div>
<div class="t" style="left:771.60px;width:400px;text-align:center;top:335.56px;font-size:12.6px;line-height:16px;color:#ffffff;letter-spacing:-0.3px;">LG</div>
<div class="t" style="left:990.2px;top:332.62px;width:73.8px;overflow:hidden;font-size:16.25px;line-height:20px;color:#222222;">Lori Garcia</div>
<div class="t" style="right:1834.70px;top:366.87px;font-size:15px;line-height:18px;color:#777474;text-align:right;">6</div>
<div class="r" style="left:245.6px;top:364.9px;width:13.6px;height:13.6px;background:#f1f1f1;border-radius:2.5px;box-shadow:inset 0 0 0 0.8px rgba(0,0,0,0.08);"></div>
<div class="r" style="left:248.8px;top:370.8px;width:7.2px;height:2.3px;background:#333;border-radius:1px;"></div>
<div class="t" style="left:266px;top:363.20px;width:248px;overflow:hidden;font-size:16.25px;line-height:20px;font-weight:bold;color:#ffffff;">Phase 2: Development &amp; Testing</div>
<div class="t" style="left:530.00px;top:363.39px;font-size:16.25px;line-height:20px;color:#ffffff;font-weight:bold;">07/24/25</div>
<div class="t" style="left:641.50px;top:363.39px;font-size:16.25px;line-height:20px;color:#ffffff;font-weight:bold;">08/06/25</div>
<div class="t" style="right:1097.50px;top:363.39px;font-size:16.25px;line-height:20px;color:#ffffff;text-align:right;font-weight:bold;">10d</div>
<div class="t" style="right:977.50px;top:363.39px;font-size:16.25px;line-height:20px;color:#ffffff;text-align:right;font-weight:bold;">0%</div>
<div class="r" style="left:959.4px;top:361.7px;width:24.5px;height:24.5px;border-radius:50%;background:#5ba645;"></div>
<div class="t" style="left:771.60px;width:400px;text-align:center;top:366.14px;font-size:12.6px;line-height:16px;color:#ffffff;font-weight:bold;letter-spacing:-0.3px;">SS</div>
<div class="t" style="left:990.2px;top:363.20px;width:73.8px;overflow:hidden;font-size:16.25px;line-height:20px;font-weight:bold;color:#ffffff;">Sam Smith</div>
<div class="t" style="right:1834.70px;top:397.45px;font-size:15px;line-height:18px;color:#777474;text-align:right;">7</div>
<div class="t" style="left:284.5px;top:393.78px;width:229.5px;overflow:hidden;font-size:16.25px;line-height:20px;color:#222222;">Develop core modules</div>
<div class="t" style="left:530.00px;top:393.97px;font-size:16.25px;line-height:20px;color:#222222;">07/24/25</div>
<div class="t" style="left:641.50px;top:393.97px;font-size:16.25px;line-height:20px;color:#222222;">08/04/25</div>
<div class="t" style="right:1097.50px;top:393.97px;font-size:16.25px;line-height:20px;color:#222222;text-align:right;">8d</div>
<div class="t" style="right:977.50px;top:393.97px;font-size:16.25px;line-height:20px;color:#222222;text-align:right;">0%</div>
<div class="r" style="left:959.4px;top:392.3px;width:24.5px;height:24.5px;border-radius:50%;background:#b4473e;"></div>
<div class="t" style="left:771.60px;width:400px;text-align:center;top:396.72px;font-size:12.6px;line-height:16px;color:#ffffff;letter-spacing:-0.3px;">AP</div>
<div class="t" style="left:990.2px;top:393.78px;width:73.8px;overflow:hidden;font-size:16.25px;line-height:20px;color:#222222;">Aviv Perez</div>
<div class="t" style="right:1834.70px;top:428.03px;font-size:15px;line-height:18px;color:#777474;text-align:right;">8</div>
<div class="t" style="left:284.5px;top:424.36px;width:229.5px;overflow:hidden;font-size:16.25px;line-height:20px;color:#222222;">Integrate APIs</div>
<div class="t" style="left:530.00px;top:424.55px;font-size:16.25px;line-height:20px;color:#222222;">07/24/25</div>
<div class="t" style="left:641.50px;top:424.55px;font-size:16.25px;line-height:20px;color:#222222;">07/25/25</div>
<div class="t" style="right:1097.50px;top:424.55px;font-size:16.25px;line-height:20px;color:#222222;text-align:right;">2d</div>
<div class="t" style="right:977.50px;top:424.55px;font-size:16.25px;line-height:20px;color:#222222;text-align:right;">0%</div>
<div class="r" style="left:959.4px;top:422.9px;width:24.5px;height:24.5px;border-radius:50%;background:#7b7a3c;"></div>
<div class="t" style="left:771.60px;width:400px;text-align:center;top:427.30px;font-size:12.6px;line-height:16px;color:#ffffff;letter-spacing:-0.3px;">BJ</div>
<div class="t" style="left:990.2px;top:424.36px;width:73.8px;overflow:hidden;font-size:16.25px;line-height:20px;color:#222222;">Brooklyn Jansen</div>
<div class="t" style="right:1834.70px;top:458.61px;font-size:15px;line-height:18px;color:#777474;text-align:right;">9</div>
<div class="t" style="left:284.5px;top:454.94px;width:229.5px;overflow:hidden;font-size:16.25px;line-height:20px;color:#222222;">Perform unit tests</div>
<div class="t" style="left:530.00px;top:455.13px;font-size:16.25px;line-height:20px;color:#222222;">08/05/25</div>
<div class="t" style="left:641.50px;top:455.13px;font-size:16.25px;line-height:20px;color:#222222;">08/06/25</div>
<div class="t" style="right:1097.50px;top:455.13px;font-size:16.25px;line-height:20px;color:#222222;text-align:right;">2d</div>
<div class="t" style="right:977.50px;top:455.13px;font-size:16.25px;line-height:20px;color:#222222;text-align:right;">0%</div>
<div class="r" style="left:959.4px;top:453.5px;width:24.5px;height:24.5px;border-radius:50%;background:#4f8bb0;"></div>
<div class="t" style="left:771.60px;width:400px;text-align:center;top:457.88px;font-size:12.6px;line-height:16px;color:#ffffff;letter-spacing:-0.3px;">LG</div>
<div class="t" style="left:990.2px;top:454.94px;width:73.8px;overflow:hidden;font-size:16.25px;line-height:20px;color:#222222;">Lori Garcia</div>
<div class="t" style="right:1834.70px;top:489.19px;font-size:15px;line-height:18px;color:#777474;text-align:right;">10</div>
<div class="r" style="left:245.6px;top:487.2px;width:13.6px;height:13.6px;background:#e6e9ee;border-radius:2.5px;box-shadow:inset 0 0 0 0.8px #d2d3d5;"></div>
<div class="r" style="left:248.8px;top:493.1px;width:7.2px;height:2.3px;background:#333;border-radius:1px;"></div>
<div class="t" style="left:266px;top:485.52px;width:248px;overflow:hidden;font-size:16.25px;line-height:20px;font-weight:bold;color:#111111;">Phase 3: Resource Allocation</div>
<div class="t" style="left:530.00px;top:485.71px;font-size:16.25px;line-height:20px;color:#111111;font-weight:bold;">08/07/25</div>
<div class="t" style="left:641.50px;top:485.71px;font-size:16.25px;line-height:20px;color:#111111;font-weight:bold;">08/14/25</div>
<div class="t" style="right:1097.50px;top:485.71px;font-size:16.25px;line-height:20px;color:#111111;text-align:right;font-weight:bold;">6d</div>
<div class="t" style="right:977.50px;top:485.71px;font-size:16.25px;line-height:20px;color:#111111;text-align:right;font-weight:bold;">0%</div>
<div class="r" style="left:959.4px;top:484.1px;width:24.5px;height:24.5px;border-radius:50%;background:#b4473e;"></div>
<div class="t" style="left:771.60px;width:400px;text-align:center;top:488.46px;font-size:12.6px;line-height:16px;color:#ffffff;font-weight:bold;letter-spacing:-0.3px;">AP</div>
<div class="t" style="left:990.2px;top:485.52px;width:73.8px;overflow:hidden;font-size:16.25px;line-height:20px;font-weight:bold;color:#111111;">Aviv Perez</div>
<div class="t" style="right:1834.70px;top:519.77px;font-size:15px;line-height:18px;color:#777474;text-align:right;">11</div>
<div class="t" style="left:284.5px;top:516.10px;width:229.5px;overflow:hidden;font-size:16.25px;line-height:20px;color:#222222;">Identify required resources (people, tools)</div>
<div class="t" style="left:530.00px;top:516.29px;font-size:16.25px;line-height:20px;color:#222222;">08/07/25</div>
<div class="t" style="left:641.50px;top:516.29px;font-size:16.25px;line-height:20px;color:#222222;">08/08/25</div>
<div class="t" style="right:1097.50px;top:516.29px;font-size:16.25px;line-height:20px;color:#222222;text-align:right;">2d</div>
<div class="t" style="right:977.50px;top:516.29px;font-size:16.25px;line-height:20px;color:#222222;text-align:right;">0%</div>
<div class="r" style="left:959.4px;top:514.6px;width:24.5px;height:24.5px;border-radius:50%;background:#7b7a3c;"></div>
<div class="t" style="left:771.60px;width:400px;text-align:center;top:519.04px;font-size:12.6px;line-height:16px;color:#ffffff;letter-spacing:-0.3px;">BJ</div>
<div class="t" style="left:990.20px;top:514.79px;font-size:16.25px;line-height:20px;color:#222222;">Brooklyn</div>
<div class="t" style="left:990.20px;top:534.09px;font-size:16.25px;line-height:20px;color:#222222;">Jansen</div>
<div class="t" style="right:1834.70px;top:563.77px;font-size:15px;line-height:18px;color:#777474;text-align:right;">12</div>
<div class="t" style="left:284.5px;top:560.10px;width:229.5px;overflow:hidden;font-size:16.25px;line-height:20px;color:#222222;">Confirm availability of team members</div>
<div class="t" style="left:530.00px;top:560.29px;font-size:16.25px;line-height:20px;color:#222222;">08/11/25</div>
<div class="t" style="left:641.50px;top:560.29px;font-size:16.25px;line-height:20px;color:#222222;">08/12/25</div>
<div class="t" style="right:1097.50px;top:560.29px;font-size:16.25px;line-height:20px;color:#222222;text-align:right;">2d</div>
<div class="t" style="right:977.50px;top:560.29px;font-size:16.25px;line-height:20px;color:#222222;text-align:right;">0%</div>
<div class="r" style="left:959.4px;top:558.6px;width:24.5px;height:24.5px;border-radius:50%;background:#4f8bb0;"></div>
<div class="t" style="left:771.60px;width:400px;text-align:center;top:563.04px;font-size:12.6px;line-height:16px;color:#ffffff;letter-spacing:-0.3px;">LG</div>
<div class="t" style="left:990.2px;top:560.10px;width:73.8px;overflow:hidden;font-size:16.25px;line-height:20px;color:#222222;">Lori Garcia</div>
<div class="t" style="right:1834.70px;top:594.35px;font-size:15px;line-height:18px;color:#777474;text-align:right;">13</div>
<div class="t" style="left:284.5px;top:590.68px;width:229.5px;overflow:hidden;font-size:16.25px;line-height:20px;color:#222222;">Allocate budget</div>
<div class="t" style="left:530.00px;top:590.87px;font-size:16.25px;line-height:20px;color:#222222;">08/12/25</div>
<div class="t" style="left:641.50px;top:590.87px;font-size:16.25px;line-height:20px;color:#222222;">08/14/25</div>
<div class="t" style="right:1097.50px;top:590.87px;font-size:16.25px;line-height:20px;color:#222222;text-align:right;">3d</div>
<div class="t" style="right:977.50px;top:590.87px;font-size:16.25px;line-height:20px;color:#222222;text-align:right;">0%</div>
<div class="r" style="left:959.4px;top:589.2px;width:24.5px;height:24.5px;border-radius:50%;background:#5ba645;"></div>
<div class="t" style="left:771.60px;width:400px;text-align:center;top:593.62px;font-size:12.6px;line-height:16px;color:#ffffff;letter-spacing:-0.3px;">SS</div>
<div class="t" style="left:990.2px;top:590.68px;width:73.8px;overflow:hidden;font-size:16.25px;line-height:20px;color:#222222;">Sam Smith</div>
<div class="t" style="right:1834.70px;top:624.93px;font-size:15px;line-height:18px;color:#777474;text-align:right;">14</div>
<div class="r" style="left:245.6px;top:623.0px;width:13.6px;height:13.6px;background:#e6e9ee;border-radius:2.5px;box-shadow:inset 0 0 0 0.8px #d2d3d5;"></div>
<div class="r" style="left:248.8px;top:628.9px;width:7.2px;height:2.3px;background:#333;border-radius:1px;"></div>
<div class="t" style="left:266px;top:621.26px;width:248px;overflow:hidden;font-size:16.25px;line-height:20px;font-weight:bold;color:#111111;">Phase 4: Design Phase</div>
<div class="t" style="left:530.00px;top:621.45px;font-size:16.25px;line-height:20px;color:#111111;font-weight:bold;">08/15/25</div>
<div class="t" style="left:641.50px;top:621.45px;font-size:16.25px;line-height:20px;color:#111111;font-weight:bold;">08/22/25</div>
<div class="t" style="right:1097.50px;top:621.45px;font-size:16.25px;line-height:20px;color:#111111;text-align:right;font-weight:bold;">6d</div>
<div class="t" style="right:977.50px;top:621.45px;font-size:16.25px;line-height:20px;color:#111111;text-align:right;font-weight:bold;">0%</div>
<div class="r" style="left:959.4px;top:619.8px;width:24.5px;height:24.5px;border-radius:50%;background:#7b7a3c;"></div>
<div class="t" style="left:771.60px;width:400px;text-align:center;top:624.20px;font-size:12.6px;line-height:16px;color:#ffffff;font-weight:bold;letter-spacing:-0.3px;">BJ</div>
<div class="t" style="left:990.2px;top:621.26px;width:73.8px;overflow:hidden;font-size:16.25px;line-height:20px;font-weight:bold;color:#111111;">Brooklyn Jansen</div>
<div class="t" style="right:1834.70px;top:655.51px;font-size:15px;line-height:18px;color:#777474;text-align:right;">15</div>
<div class="t" style="left:284.5px;top:651.84px;width:229.5px;overflow:hidden;font-size:16.25px;line-height:20px;color:#222222;">Create sketches</div>
<div class="t" style="left:530.00px;top:652.03px;font-size:16.25px;line-height:20px;color:#222222;">08/15/25</div>
<div class="t" style="left:641.50px;top:652.03px;font-size:16.25px;line-height:20px;color:#222222;">08/19/25</div>
<div class="t" style="right:1097.50px;top:652.03px;font-size:16.25px;line-height:20px;color:#222222;text-align:right;">3d</div>
<div class="t" style="right:977.50px;top:652.03px;font-size:16.25px;line-height:20px;color:#222222;text-align:right;">0%</div>
<div class="r" style="left:959.4px;top:650.4px;width:24.5px;height:24.5px;border-radius:50%;background:#f3ad8b;"></div>
<div class="t" style="left:771.60px;width:400px;text-align:center;top:654.78px;font-size:12.6px;line-height:16px;color:#ffffff;letter-spacing:-0.3px;">BG</div>
<div class="t" style="left:990.2px;top:651.84px;width:73.8px;overflow:hidden;font-size:16.25px;line-height:20px;color:#222222;">Brian Germain</div>
<div class="t" style="right:1834.70px;top:686.09px;font-size:15px;line-height:18px;color:#777474;text-align:right;">16</div>
<div class="t" style="left:284.5px;top:682.42px;width:229.5px;overflow:hidden;font-size:16.25px;line-height:20px;color:#222222;">Review design ideas with stakeholders</div>
<div class="t" style="left:530.00px;top:682.61px;font-size:16.25px;line-height:20px;color:#222222;">08/20/25</div>
<div class="t" style="left:641.50px;top:682.61px;font-size:16.25px;line-height:20px;color:#222222;">08/20/25</div>
<div class="t" style="right:1097.50px;top:682.61px;font-size:16.25px;line-height:20px;color:#222222;text-align:right;">1d</div>
<div class="t" style="right:977.50px;top:682.61px;font-size:16.25px;line-height:20px;color:#222222;text-align:right;">0%</div>
<div class="r" style="left:959.4px;top:681.0px;width:24.5px;height:24.5px;border-radius:50%;background:#7b7a3c;"></div>
<div class="t" style="left:771.60px;width:400px;text-align:center;top:685.36px;font-size:12.6px;line-height:16px;color:#ffffff;letter-spacing:-0.3px;">BJ</div>
<div class="t" style="left:990.2px;top:682.42px;width:73.8px;overflow:hidden;font-size:16.25px;line-height:20px;color:#222222;">Brooklyn Jansen</div>
<div class="t" style="right:1834.70px;top:716.67px;font-size:15px;line-height:18px;color:#777474;text-align:right;">17</div>
<div class="t" style="left:284.5px;top:713.00px;width:229.5px;overflow:hidden;font-size:16.25px;line-height:20px;color:#222222;">Produce final design assets</div>
<div class="t" style="left:530.00px;top:713.19px;font-size:16.25px;line-height:20px;color:#222222;">08/21/25</div>
<div class="t" style="left:641.50px;top:713.19px;font-size:16.25px;line-height:20px;color:#222222;">08/21/25</div>
<div class="t" style="right:1097.50px;top:713.19px;font-size:16.25px;line-height:20px;color:#222222;text-align:right;">1d</div>
<div class="t" style="right:977.50px;top:713.19px;font-size:16.25px;line-height:20px;color:#222222;text-align:right;">0%</div>
<div class="r" style="left:959.4px;top:711.6px;width:24.5px;height:24.5px;border-radius:50%;background:#4f8bb0;"></div>
<div class="t" style="left:771.60px;width:400px;text-align:center;top:715.94px;font-size:12.6px;line-height:16px;color:#ffffff;letter-spacing:-0.3px;">LG</div>
<div class="t" style="left:990.2px;top:713.00px;width:73.8px;overflow:hidden;font-size:16.25px;line-height:20px;color:#222222;">Lori Garcia</div>
<div class="t" style="right:1834.70px;top:747.25px;font-size:15px;line-height:18px;color:#777474;text-align:right;">18</div>
<div class="t" style="left:284.5px;top:743.58px;width:229.5px;overflow:hidden;font-size:16.25px;line-height:20px;color:#222222;">Obtain sign-off</div>
<div class="t" style="left:530.00px;top:743.77px;font-size:16.25px;line-height:20px;color:#222222;">08/22/25</div>
<div class="t" style="left:641.50px;top:743.77px;font-size:16.25px;line-height:20px;color:#222222;">08/22/25</div>
<div class="t" style="right:1097.50px;top:743.77px;font-size:16.25px;line-height:20px;color:#222222;text-align:right;">1d</div>
<div class="t" style="right:977.50px;top:743.77px;font-size:16.25px;line-height:20px;color:#222222;text-align:right;">0%</div>
<div class="r" style="left:959.4px;top:742.1px;width:24.5px;height:24.5px;border-radius:50%;background:#4f8bb0;"></div>
<div class="t" style="left:771.60px;width:400px;text-align:center;top:746.52px;font-size:12.6px;line-height:16px;color:#ffffff;letter-spacing:-0.3px;">LG</div>
<div class="t" style="left:990.2px;top:743.58px;width:73.8px;overflow:hidden;font-size:16.25px;line-height:20px;color:#222222;">Lori Garcia</div>
<div class="t" style="right:1834.70px;top:777.83px;font-size:15px;line-height:18px;color:#777474;text-align:right;">19</div>
<div class="r" style="left:227.0px;top:775.9px;width:13.6px;height:13.6px;background:#f1f1f1;border-radius:2.5px;box-shadow:inset 0 0 0 0.8px rgba(0,0,0,0.08);"></div>
<div class="r" style="left:230.2px;top:781.8px;width:7.2px;height:2.3px;background:#333;border-radius:1px;"></div>
<div class="t" style="left:247.50px;top:774.35px;font-size:16.25px;line-height:20px;color:#ffffff;font-weight:bold;">PROJECT 2:</div>
<div class="t" style="right:977.50px;top:774.35px;font-size:16.25px;line-height:20px;color:#ffffff;text-align:right;font-weight:bold;">0%</div>
<div class="t" style="right:1834.70px;top:808.41px;font-size:15px;line-height:18px;color:#777474;text-align:right;">20</div>
<div class="r" style="left:245.6px;top:806.4px;width:13.6px;height:13.6px;background:#f1f1f1;border-radius:2.5px;box-shadow:inset 0 0 0 0.8px rgba(0,0,0,0.08);"></div>
<div class="r" style="left:248.8px;top:812.3px;width:7.2px;height:2.3px;background:#333;border-radius:1px;"></div>
<div class="t" style="left:266px;top:804.74px;width:248px;overflow:hidden;font-size:16.25px;line-height:20px;font-weight:bold;color:#ffffff;">Phase 1:</div>
<div class="t" style="right:977.50px;top:804.93px;font-size:16.25px;line-height:20px;color:#ffffff;text-align:right;font-weight:bold;">0%</div>
<div class="r" style="left:959.4px;top:803.3px;width:24.5px;height:24.5px;border-radius:50%;background:#f3ad8b;"></div>
<div class="t" style="left:771.60px;width:400px;text-align:center;top:807.68px;font-size:12.6px;line-height:16px;color:#ffffff;font-weight:bold;letter-spacing:-0.3px;">BG</div>
<div class="t" style="left:990.2px;top:804.74px;width:73.8px;overflow:hidden;font-size:16.25px;line-height:20px;font-weight:bold;color:#ffffff;">Brian Germain</div>
<div class="t" style="right:1834.70px;top:838.99px;font-size:15px;line-height:18px;color:#777474;text-align:right;">21</div>
<div class="t" style="left:284.5px;top:835.32px;width:229.5px;overflow:hidden;font-size:16.25px;line-height:20px;color:#222222;">Enter task description / title</div>
<div class="t" style="right:977.50px;top:835.51px;font-size:16.25px;line-height:20px;color:#222222;text-align:right;">0%</div>
<div class="r" style="left:959.4px;top:833.9px;width:24.5px;height:24.5px;border-radius:50%;background:#b4473e;"></div>
<div class="t" style="left:771.60px;width:400px;text-align:center;top:838.26px;font-size:12.6px;line-height:16px;color:#ffffff;letter-spacing:-0.3px;">AP</div>
<div class="t" style="left:990.2px;top:835.32px;width:73.8px;overflow:hidden;font-size:16.25px;line-height:20px;color:#222222;">Aviv Perez</div>
<div class="t" style="right:1834.70px;top:869.57px;font-size:15px;line-height:18px;color:#777474;text-align:right;">22</div>
<div class="t" style="right:977.50px;top:866.09px;font-size:16.25px;line-height:20px;color:#222222;text-align:right;">0%</div>
<div class="r" style="left:959.4px;top:864.5px;width:24.5px;height:24.5px;border-radius:50%;background:#7b7a3c;"></div>
<div class="t" style="left:771.60px;width:400px;text-align:center;top:868.84px;font-size:12.6px;line-height:16px;color:#ffffff;letter-spacing:-0.3px;">BJ</div>
<div class="t" style="left:990.2px;top:865.90px;width:73.8px;overflow:hidden;font-size:16.25px;line-height:20px;color:#222222;">Brooklyn Jansen</div>
<div class="t" style="right:1834.70px;top:900.15px;font-size:15px;line-height:18px;color:#777474;text-align:right;">23</div>
<div class="t" style="right:977.50px;top:896.67px;font-size:16.25px;line-height:20px;color:#222222;text-align:right;">0%</div>
<div class="r" style="left:959.4px;top:895.0px;width:24.5px;height:24.5px;border-radius:50%;background:#4f8bb0;"></div>
<div class="t" style="left:771.60px;width:400px;text-align:center;top:899.42px;font-size:12.6px;line-height:16px;color:#ffffff;letter-spacing:-0.3px;">LG</div>
<div class="t" style="left:990.2px;top:896.48px;width:73.8px;overflow:hidden;font-size:16.25px;line-height:20px;color:#222222;">Lori Garcia</div>
<div class="t" style="right:1834.70px;top:930.73px;font-size:15px;line-height:18px;color:#777474;text-align:right;">24</div>
<div class="r" style="left:245.6px;top:928.8px;width:13.6px;height:13.6px;background:#f1f1f1;border-radius:2.5px;box-shadow:inset 0 0 0 0.8px rgba(0,0,0,0.08);"></div>
<div class="r" style="left:248.8px;top:934.7px;width:7.2px;height:2.3px;background:#333;border-radius:1px;"></div>
<div class="t" style="left:266px;top:927.06px;width:248px;overflow:hidden;font-size:16.25px;line-height:20px;font-weight:bold;color:#ffffff;">Phase 2:</div>
<div class="t" style="right:977.50px;top:927.25px;font-size:16.25px;line-height:20px;color:#ffffff;text-align:right;font-weight:bold;">0%</div>
<div class="r" style="left:959.4px;top:925.6px;width:24.5px;height:24.5px;border-radius:50%;background:#5ba645;"></div>
<div class="t" style="left:771.60px;width:400px;text-align:center;top:930.00px;font-size:12.6px;line-height:16px;color:#ffffff;font-weight:bold;letter-spacing:-0.3px;">SS</div>
<div class="t" style="left:990.2px;top:927.06px;width:73.8px;overflow:hidden;font-size:16.25px;line-height:20px;font-weight:bold;color:#ffffff;">Sam Smith</div>
<div class="t" style="right:1834.70px;top:961.31px;font-size:15px;line-height:18px;color:#777474;text-align:right;">25</div>
<div class="t" style="left:284.5px;top:957.64px;width:229.5px;overflow:hidden;font-size:16.25px;line-height:20px;color:#222222;">Enter task description / title</div>
<div class="t" style="right:977.50px;top:957.83px;font-size:16.25px;line-height:20px;color:#222222;text-align:right;">0%</div>
<div class="r" style="left:959.4px;top:956.2px;width:24.5px;height:24.5px;border-radius:50%;background:#b4473e;"></div>
<div class="t" style="left:771.60px;width:400px;text-align:center;top:960.58px;font-size:12.6px;line-height:16px;color:#ffffff;letter-spacing:-0.3px;">AP</div>
<div class="t" style="left:990.2px;top:957.64px;width:73.8px;overflow:hidden;font-size:16.25px;line-height:20px;color:#222222;">Aviv Perez</div>
<div class="t" style="right:1834.70px;top:991.89px;font-size:15px;line-height:18px;color:#777474;text-align:right;">26</div>
<div class="t" style="right:977.50px;top:988.41px;font-size:16.25px;line-height:20px;color:#222222;text-align:right;">0%</div>
<div class="r" style="left:959.4px;top:986.8px;width:24.5px;height:24.5px;border-radius:50%;background:#7b7a3c;"></div>
<div class="t" style="left:771.60px;width:400px;text-align:center;top:991.16px;font-size:12.6px;line-height:16px;color:#ffffff;letter-spacing:-0.3px;">BJ</div>
<div class="t" style="left:990.2px;top:988.22px;width:73.8px;overflow:hidden;font-size:16.25px;line-height:20px;color:#222222;">Brooklyn Jansen</div>
<div class="t" style="right:1834.70px;top:1022.47px;font-size:15px;line-height:18px;color:#777474;text-align:right;">27</div>
<div class="t" style="right:977.50px;top:1018.99px;font-size:16.25px;line-height:20px;color:#222222;text-align:right;">0%</div>
<div class="r" style="left:959.4px;top:1017.4px;width:24.5px;height:24.5px;border-radius:50%;background:#4f8bb0;"></div>
<div class="t" style="left:771.60px;width:400px;text-align:center;top:1021.74px;font-size:12.6px;line-height:16px;color:#ffffff;letter-spacing:-0.3px;">LG</div>
<div class="t" style="left:990.2px;top:1018.80px;width:73.8px;overflow:hidden;font-size:16.25px;line-height:20px;color:#222222;">Lori Garcia</div>
<div class="t" style="right:1834.70px;top:1053.05px;font-size:15px;line-height:18px;color:#777474;text-align:right;">28</div>
<div class="r" style="left:245.6px;top:1051.1px;width:13.6px;height:13.6px;background:#e6e9ee;border-radius:2.5px;box-shadow:inset 0 0 0 0.8px #d2d3d5;"></div>
<div class="r" style="left:248.8px;top:1057.0px;width:7.2px;height:2.3px;background:#333;border-radius:1px;"></div>
<div class="t" style="left:266px;top:1049.38px;width:248px;overflow:hidden;font-size:16.25px;line-height:20px;font-weight:bold;color:#111111;">Phase 3:</div>
<div class="t" style="right:977.50px;top:1049.57px;font-size:16.25px;line-height:20px;color:#111111;text-align:right;font-weight:bold;">0%</div>
<div class="r" style="left:959.4px;top:1047.9px;width:24.5px;height:24.5px;border-radius:50%;background:#b4473e;"></div>
<div class="t" style="left:771.60px;width:400px;text-align:center;top:1052.32px;font-size:12.6px;line-height:16px;color:#ffffff;font-weight:bold;letter-spacing:-0.3px;">AP</div>
<div class="t" style="left:990.2px;top:1049.38px;width:73.8px;overflow:hidden;font-size:16.25px;line-height:20px;font-weight:bold;color:#111111;">Aviv Perez</div>
<div class="t" style="right:1834.70px;top:1083.63px;font-size:15px;line-height:18px;color:#777474;text-align:right;">29</div>
<div class="t" style="left:284.5px;top:1079.96px;width:229.5px;overflow:hidden;font-size:16.25px;line-height:20px;color:#222222;">Enter task description / title</div>
<div class="t" style="right:977.50px;top:1080.15px;font-size:16.25px;line-height:20px;color:#222222;text-align:right;">0%</div>
<div class="r" style="left:959.4px;top:1078.5px;width:24.5px;height:24.5px;border-radius:50%;background:#7b7a3c;"></div>
<div class="t" style="left:771.60px;width:400px;text-align:center;top:1082.90px;font-size:12.6px;line-height:16px;color:#ffffff;letter-spacing:-0.3px;">BJ</div>
<div class="t" style="left:990.20px;top:1078.65px;font-size:16.25px;line-height:20px;color:#222222;">Brooklyn</div>
<div class="t" style="left:990.20px;top:1097.95px;font-size:16.25px;line-height:20px;color:#222222;">Jansen</div>
<div class="t" style="right:1834.70px;top:1127.63px;font-size:15px;line-height:18px;color:#777474;text-align:right;">30</div>
<div class="t" style="right:977.50px;top:1124.15px;font-size:16.25px;line-height:20px;color:#222222;text-align:right;">0%</div>
<div class="r" style="left:959.4px;top:1122.5px;width:24.5px;height:24.5px;border-radius:50%;background:#4f8bb0;"></div>
<div class="t" style="left:771.60px;width:400px;text-align:center;top:1126.90px;font-size:12.6px;line-height:16px;color:#ffffff;letter-spacing:-0.3px;">LG</div>
<div class="t" style="left:990.2px;top:1123.96px;width:73.8px;overflow:hidden;font-size:16.25px;line-height:20px;color:#222222;">Lori Garcia</div>
<div class="t" style="right:1834.70px;top:1158.21px;font-size:15px;line-height:18px;color:#777474;text-align:right;">31</div>
<div class="t" style="right:977.50px;top:1154.73px;font-size:16.25px;line-height:20px;color:#222222;text-align:right;">0%</div>
<div class="r" style="left:959.4px;top:1153.1px;width:24.5px;height:24.5px;border-radius:50%;background:#5ba645;"></div>
<div class="t" style="left:771.60px;width:400px;text-align:center;top:1157.48px;font-size:12.6px;line-height:16px;color:#ffffff;letter-spacing:-0.3px;">SS</div>
<div class="t" style="left:990.2px;top:1154.54px;width:73.8px;overflow:hidden;font-size:16.25px;line-height:20px;color:#222222;">Sam Smith</div>
<div class="t" style="right:1834.70px;top:1188.79px;font-size:15px;line-height:18px;color:#777474;text-align:right;">32</div>
<div class="r" style="left:245.6px;top:1186.8px;width:13.6px;height:13.6px;background:#e6e9ee;border-radius:2.5px;box-shadow:inset 0 0 0 0.8px #d2d3d5;"></div>
<div class="r" style="left:248.8px;top:1192.7px;width:7.2px;height:2.3px;background:#333;border-radius:1px;"></div>
<div class="t" style="left:266px;top:1185.12px;width:248px;overflow:hidden;font-size:16.25px;line-height:20px;font-weight:bold;color:#111111;">Phase 4:</div>
<div class="t" style="right:977.50px;top:1185.31px;font-size:16.25px;line-height:20px;color:#111111;text-align:right;font-weight:bold;">0%</div>
<div class="r" style="left:959.4px;top:1183.7px;width:24.5px;height:24.5px;border-radius:50%;background:#7b7a3c;"></div>
<div class="t" style="left:771.60px;width:400px;text-align:center;top:1188.06px;font-size:12.6px;line-height:16px;color:#ffffff;font-weight:bold;letter-spacing:-0.3px;">BJ</div>
<div class="t" style="left:990.2px;top:1185.12px;width:73.8px;overflow:hidden;font-size:16.25px;line-height:20px;font-weight:bold;color:#111111;">Brooklyn Jansen</div>
<div class="t" style="right:1834.70px;top:1219.37px;font-size:15px;line-height:18px;color:#777474;text-align:right;">33</div>
<div class="t" style="left:284.5px;top:1215.70px;width:229.5px;overflow:hidden;font-size:16.25px;line-height:20px;color:#222222;">Enter task description / title</div>
<div class="t" style="right:977.50px;top:1215.89px;font-size:16.25px;line-height:20px;color:#222222;text-align:right;">0%</div>
<div class="r" style="left:959.4px;top:1214.3px;width:24.5px;height:24.5px;border-radius:50%;background:#f3ad8b;"></div>
<div class="t" style="left:771.60px;width:400px;text-align:center;top:1218.64px;font-size:12.6px;line-height:16px;color:#ffffff;letter-spacing:-0.3px;">BG</div>
<div class="t" style="left:990.2px;top:1215.70px;width:73.8px;overflow:hidden;font-size:16.25px;line-height:20px;color:#222222;">Brian Germain</div>
<div class="t" style="right:1834.70px;top:1249.95px;font-size:15px;line-height:18px;color:#777474;text-align:right;">34</div>
<div class="t" style="right:977.50px;top:1246.47px;font-size:16.25px;line-height:20px;color:#222222;text-align:right;">0%</div>
<div class="r" style="left:959.4px;top:1244.8px;width:24.5px;height:24.5px;border-radius:50%;background:#7b7a3c;"></div>
<div class="t" style="left:771.60px;width:400px;text-align:center;top:1249.22px;font-size:12.6px;line-height:16px;color:#ffffff;letter-spacing:-0.3px;">BJ</div>
<div class="t" style="left:990.2px;top:1246.28px;width:73.8px;overflow:hidden;font-size:16.25px;line-height:20px;color:#222222;">Brooklyn Jansen</div>
<div class="t" style="right:1834.70px;top:1280.53px;font-size:15px;line-height:18px;color:#777474;text-align:right;">35</div>
<div class="t" style="right:977.50px;top:1277.05px;font-size:16.25px;line-height:20px;color:#222222;text-align:right;">0%</div>
<div class="r" style="left:959.4px;top:1275.4px;width:24.5px;height:24.5px;border-radius:50%;background:#4f8bb0;"></div>
<div class="t" style="left:771.60px;width:400px;text-align:center;top:1279.80px;font-size:12.6px;line-height:16px;color:#ffffff;letter-spacing:-0.3px;">LG</div>
<div class="t" style="left:990.2px;top:1276.86px;width:73.8px;overflow:hidden;font-size:16.25px;line-height:20px;color:#222222;">Lori Garcia</div>
<div class="t" style="right:1834.70px;top:1311.11px;font-size:15px;line-height:18px;color:#777474;text-align:right;">36</div>
<div class="t" style="right:977.50px;top:1307.63px;font-size:16.25px;line-height:20px;color:#222222;text-align:right;">0%</div>
<div class="r" style="left:959.4px;top:1306.0px;width:24.5px;height:24.5px;border-radius:50%;background:#4f8bb0;"></div>
<div class="t" style="left:771.60px;width:400px;text-align:center;top:1310.38px;font-size:12.6px;line-height:16px;color:#ffffff;letter-spacing:-0.3px;">LG</div>
<div class="t" style="left:990.2px;top:1307.44px;width:73.8px;overflow:hidden;font-size:16.25px;line-height:20px;color:#222222;">Lori Garcia</div>
<div class="t" style="right:1834.70px;top:1341.69px;font-size:15px;line-height:18px;color:#777474;text-align:right;">37</div>
<div class="t" style="right:1834.70px;top:1372.27px;font-size:15px;line-height:18px;color:#777474;text-align:right;">38</div>
<div class="t" style="right:1834.70px;top:1402.85px;font-size:15px;line-height:18px;color:#777474;text-align:right;">39</div>
<svg style="left:119.0px;top:274.0px" width="16" height="18" viewBox="0 0 16 18"><path d="M13 6.5 V11.5 A5 5 0 0 1 3 11.5 V5.5 A3.2 3.2 0 0 1 9.4 5.5 V11.5 A1.4 1.4 0 0 1 6.6 11.5 V6.5" fill="none" stroke="#4d73a0" stroke-width="1.9" stroke-linecap="round"/></svg>
<svg style="left:142.5px;top:274.5px" width="18" height="17" viewBox="0 0 18 17"><path d="M2 2.5 H16 V11.5 H8.5 L4.8 15 V11.5 H2 Z" fill="#d4e6f6" stroke="#4d73a0" stroke-width="1.8" stroke-linejoin="round"/></svg>
<div class="t" style="left:961.00px;width:400px;text-align:center;top:140.19px;font-size:16.2px;line-height:20px;color:#3d3a3a;font-weight:bold;">Jun 29</div>
<div class="t" style="left:1150.00px;width:400px;text-align:center;top:140.19px;font-size:16.2px;line-height:20px;color:#3d3a3a;font-weight:bold;">Jul 6</div>
<div class="t" style="left:1339.00px;width:400px;text-align:center;top:140.19px;font-size:16.2px;line-height:20px;color:#3d3a3a;font-weight:bold;">Jul 13</div>
<div class="t" style="left:1528.00px;width:400px;text-align:center;top:140.19px;font-size:16.2px;line-height:20px;color:#3d3a3a;font-weight:bold;">Jul 20</div>
<div class="t" style="left:1717.00px;width:400px;text-align:center;top:140.19px;font-size:16.2px;line-height:20px;color:#3d3a3a;font-weight:bold;">Jul 27</div>
<div class="t" style="left:880.00px;width:400px;text-align:center;top:165.48px;font-size:15.8px;line-height:18px;color:#b84d47;">S</div>
<div class="t" style="left:907.00px;width:400px;text-align:center;top:165.48px;font-size:15.8px;line-height:18px;color:#555151;">M</div>
<div class="t" style="left:934.00px;width:400px;text-align:center;top:165.48px;font-size:15.8px;line-height:18px;color:#555151;">T</div>
<div class="t" style="left:961.00px;width:400px;text-align:center;top:165.48px;font-size:15.8px;line-height:18px;color:#555151;">W</div>
<div class="t" style="left:988.00px;width:400px;text-align:center;top:165.48px;font-size:15.8px;line-height:18px;color:#555151;">T</div>
<div class="t" style="left:1015.00px;width:400px;text-align:center;top:165.48px;font-size:15.8px;line-height:18px;color:#555151;">F</div>
<div class="t" style="left:1042.00px;width:400px;text-align:center;top:165.48px;font-size:15.8px;line-height:18px;color:#b84d47;">S</div>
<div class="t" style="left:1069.00px;width:400px;text-align:center;top:165.48px;font-size:15.8px;line-height:18px;color:#b84d47;">S</div>
<div class="t" style="left:1096.00px;width:400px;text-align:center;top:165.48px;font-size:15.8px;line-height:18px;color:#555151;">M</div>
<div class="t" style="left:1123.00px;width:400px;text-align:center;top:165.48px;font-size:15.8px;line-height:18px;color:#555151;">T</div>
<div class="t" style="left:1150.00px;width:400px;text-align:center;top:165.48px;font-size:15.8px;line-height:18px;color:#555151;">W</div>
<div class="t" style="left:1177.00px;width:400px;text-align:center;top:165.48px;font-size:15.8px;line-height:18px;color:#555151;">T</div>
<div class="t" style="left:1204.00px;width:400px;text-align:center;top:165.48px;font-size:15.8px;line-height:18px;color:#555151;">F</div>
<div class="t" style="left:1231.00px;width:400px;text-align:center;top:165.48px;font-size:15.8px;line-height:18px;color:#b84d47;">S</div>
<div class="t" style="left:1258.00px;width:400px;text-align:center;top:165.48px;font-size:15.8px;line-height:18px;color:#b84d47;">S</div>
<div class="t" style="left:1285.00px;width:400px;text-align:center;top:165.48px;font-size:15.8px;line-height:18px;color:#555151;">M</div>
<div class="t" style="left:1312.00px;width:400px;text-align:center;top:165.48px;font-size:15.8px;line-height:18px;color:#555151;">T</div>
<div class="t" style="left:1339.00px;width:400px;text-align:center;top:165.48px;font-size:15.8px;line-height:18px;color:#555151;">W</div>
<div class="t" style="left:1366.00px;width:400px;text-align:center;top:165.48px;font-size:15.8px;line-height:18px;color:#555151;">T</div>
<div class="t" style="left:1393.00px;width:400px;text-align:center;top:165.48px;font-size:15.8px;line-height:18px;color:#555151;">F</div>
<div class="t" style="left:1420.00px;width:400px;text-align:center;top:165.48px;font-size:15.8px;line-height:18px;color:#b84d47;">S</div>
<div class="t" style="left:1447.00px;width:400px;text-align:center;top:165.48px;font-size:15.8px;line-height:18px;color:#b84d47;">S</div>
<div class="t" style="left:1474.00px;width:400px;text-align:center;top:165.48px;font-size:15.8px;line-height:18px;color:#555151;">M</div>
<div class="t" style="left:1501.00px;width:400px;text-align:center;top:165.48px;font-size:15.8px;line-height:18px;color:#555151;">T</div>
<div class="t" style="left:1528.00px;width:400px;text-align:center;top:165.48px;font-size:15.8px;line-height:18px;color:#555151;">W</div>
<div class="t" style="left:1555.00px;width:400px;text-align:center;top:165.48px;font-size:15.8px;line-height:18px;color:#555151;">T</div>
<div class="t" style="left:1582.00px;width:400px;text-align:center;top:165.48px;font-size:15.8px;line-height:18px;color:#555151;">F</div>
<div class="t" style="left:1609.00px;width:400px;text-align:center;top:165.48px;font-size:15.8px;line-height:18px;color:#b84d47;">S</div>
<div class="t" style="left:1636.00px;width:400px;text-align:center;top:165.48px;font-size:15.8px;line-height:18px;color:#b84d47;">S</div>
<div class="t" style="left:1663.00px;width:400px;text-align:center;top:165.48px;font-size:15.8px;line-height:18px;color:#555151;">M</div>
<div class="t" style="left:1690.00px;width:400px;text-align:center;top:165.48px;font-size:15.8px;line-height:18px;color:#555151;">T</div>
<div class="t" style="left:1717.00px;width:400px;text-align:center;top:165.48px;font-size:15.8px;line-height:18px;color:#555151;">W</div>
<div class="r" style="left:1255.00px;top:181.00px;width:1.00px;height:23.00px;background:#cdcbc9;"></div>
<div class="r" style="left:1444.00px;top:181.00px;width:1.00px;height:23.00px;background:#cdcbc9;"></div>
<div class="r" style="left:1633.00px;top:181.00px;width:1.00px;height:23.00px;background:#cdcbc9;"></div>
<div class="r" style="left:1822.00px;top:181.00px;width:1.00px;height:23.00px;background:#cdcbc9;"></div>
<div class="t" style="left:1910.00px;top:188.17px;font-size:15px;line-height:16px;color:#333;">×</div>
<div class="r" style="left:1066px;top:0;width:844px;height:1440px;overflow:hidden;"><div class="r" style="left:-1066px;top:0;width:1920px;height:1440px;">
<div class="r" style="left:1122.0px;top:213.2px;width:838.0px;height:12.4px;background:#d2d2d2;box-shadow:inset 0 2px 0 #e6e6e6, inset 0 -2px 0 #dcdcdc;"></div>
<div class="r" style="left:1122.0px;top:215.6px;width:344.0px;height:7.6px;background:#f2f2f2;box-shadow:inset -1.3px -1.3px 0 #a8a8a8, inset 0 1px 0 #c9c9c9;"></div>
<svg style="left:1122.0px;top:225.3px" width="8" height="8" viewBox="0 0 8 8"><path d="M0 0 H7.5 L0 7.5 Z" fill="#e4e4e4"/><path d="M7.5 0 L0 7.5" stroke="#b0b0b0" stroke-width="0.9"/></svg>
<div class="r" style="left:1122.0px;top:243.8px;width:619.5px;height:12.4px;background:#d2d2d2;box-shadow:inset 0 2px 0 #e6e6e6, inset 0 -2px 0 #dcdcdc;"></div>
<div class="r" style="left:1122.0px;top:246.2px;width:347.0px;height:7.6px;background:#f2f2f2;box-shadow:inset -1.3px -1.3px 0 #a8a8a8, inset 0 1px 0 #c9c9c9;"></div>
<svg style="left:1122.0px;top:255.9px" width="8" height="8" viewBox="0 0 8 8"><path d="M0 0 H7.5 L0 7.5 Z" fill="#e4e4e4"/><path d="M7.5 0 L0 7.5" stroke="#b0b0b0" stroke-width="0.9"/></svg>
<svg style="left:1734.0px;top:255.9px" width="8" height="8" viewBox="0 0 8 8"><path d="M0 0 H7.5 V7.5 Z" fill="#dcdcdc"/><path d="M0 0 L7.5 7.5" stroke="#b0b0b0" stroke-width="0.9"/></svg>
<div class="t" style="left:1748.00px;top:240.74px;font-size:13.7px;line-height:18px;color:#3a3737;">Phase 1: Project Setup</div>
<div class="r" style="left:1122.0px;top:274.6px;width:268.5px;height:16.4px;background:#cde6f8;box-shadow:inset 0 0 0 1px #9dbad3;"></div>
<div class="r" style="left:1123.5px;top:277.6px;width:266.5px;height:9.9px;background:#e6f4fd;box-shadow:0 0 0 1px #9fb7cc;"></div>
<div class="t" style="left:1397.00px;top:271.32px;font-size:13.7px;line-height:18px;color:#3a3737;">Define project scope</div>
<div class="r" style="left:1309.5px;top:305.1px;width:189.0px;height:16.4px;background:#cde6f8;box-shadow:inset 0 0 0 1px #9dbad3;"></div>
<div class="r" style="left:1311.0px;top:308.1px;width:93.5px;height:9.9px;background:#e6f4fd;box-shadow:0 0 0 1px #9fb7cc;"></div>
<div class="t" style="left:1505.50px;top:301.90px;font-size:13.7px;line-height:18px;color:#3a3737;">Allocate resources</div>
<div class="r" style="left:1390.5px;top:335.7px;width:351.0px;height:16.4px;background:#cde6f8;box-shadow:inset 0 0 0 1px #9dbad3;"></div>
<div class="r" style="left:1392.0px;top:338.7px;width:69.8px;height:9.9px;background:#e6f4fd;box-shadow:0 0 0 1px #9fb7cc;"></div>
<div class="t" style="left:1748.00px;top:332.48px;font-size:13.7px;line-height:18px;color:#3a3737;">Install software</div>
<div class="r" style="left:1741.5px;top:366.1px;width:218.5px;height:12.4px;background:#d2d2d2;box-shadow:inset 0 2px 0 #e6e6e6, inset 0 -2px 0 #dcdcdc;"></div>
<svg style="left:1741.5px;top:378.2px" width="8" height="8" viewBox="0 0 8 8"><path d="M0 0 H7.5 L0 7.5 Z" fill="#e4e4e4"/><path d="M7.5 0 L0 7.5" stroke="#b0b0b0" stroke-width="0.9"/></svg>
<div class="r" style="left:1741.5px;top:396.9px;width:218.5px;height:16.4px;background:#cde6f8;box-shadow:inset 0 0 0 1px #9dbad3;"></div>
<div class="r" style="left:1741.5px;top:427.5px;width:54.0px;height:16.4px;background:#cde6f8;box-shadow:inset 0 0 0 1px #9dbad3;"></div>
<div class="t" style="left:1802.00px;top:424.22px;font-size:13.7px;line-height:18px;color:#3a3737;">Integrate APIs</div>
<svg style="left:1740px;top:255.9px" width="12" height="107.4" viewBox="0 0 12 107.4"><path d="M2 2 H6.7 V103.4" fill="none" stroke="#333" stroke-width="1.1"/><path d="M3.7 99.4 L6.7 104.4 L9.7 99.4 Z" fill="#333"/></svg>
</div></div>
</div></div>
</body></html>
